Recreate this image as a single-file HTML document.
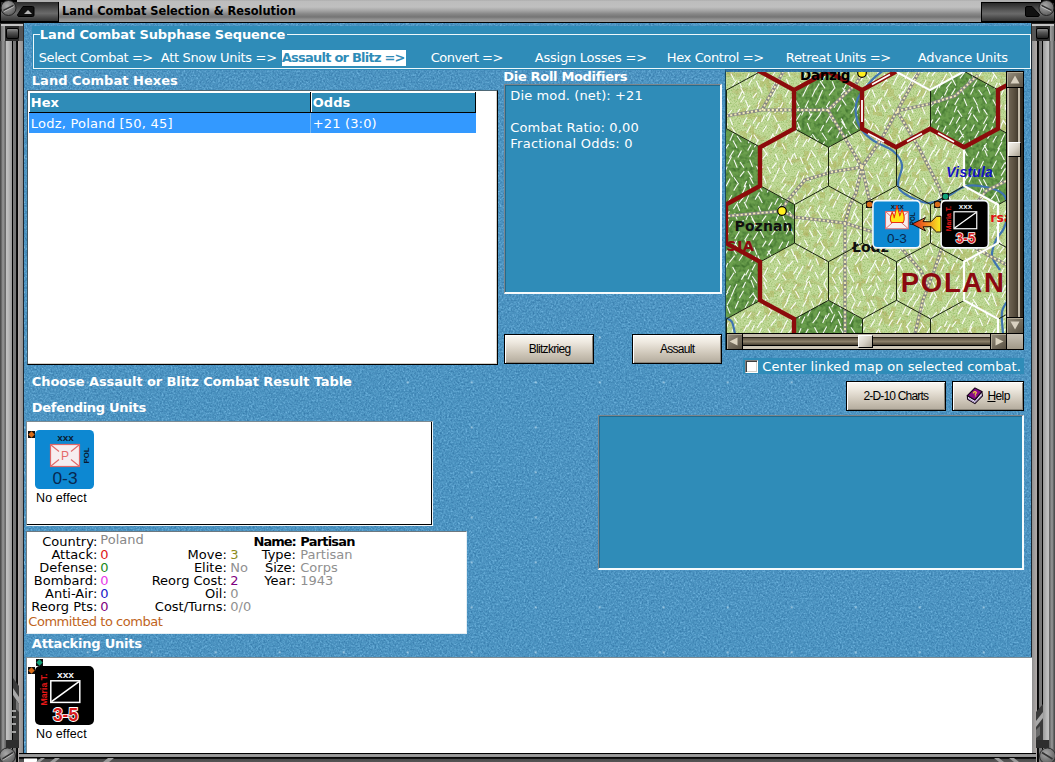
<!DOCTYPE html>
<html><head><meta charset="utf-8"><title>Land Combat Selection &amp; Resolution</title>
<style>
*{box-sizing:border-box}
html,body{margin:0;padding:0}
body{width:1055px;height:762px;overflow:hidden;position:relative;background:#4a94c0;font-family:"DejaVu Sans","Liberation Sans",sans-serif;font-size:13px;color:#fff}
.a{position:absolute}
.t{position:absolute;white-space:pre;line-height:16px;height:16px}
.b{font-weight:bold}
.ar{font-family:"Liberation Sans",sans-serif}
.solid{background:#2f8cb8}
.btn{position:absolute;border:1px solid #000;box-shadow:inset 1px 1px 0 #fff,inset -1px -1px 0 #8a8478;background:linear-gradient(#fbf8f3 0,#eee9e0 25%,#dbd4c8 50%,#c7bfb1 75%,#b3ab9d 100%);color:#000;font-family:"Liberation Sans",sans-serif;font-size:12px}
.btn .t{line-height:28px;height:28px;top:0}
.sunk{position:absolute;border:solid #f6fbfd;border-width:1px 2px 2px 1px;border-top-color:#7d858b;border-left-color:#7d858b;box-shadow:inset 1px 1px 0 rgba(0,20,40,.28)}
.lb{position:absolute;background:#fff;border:1px solid #000;border-top-color:#4e6876;border-left-color:#3c5666;box-shadow:inset -1px -1px 0 #d4d0c8}
.lb2{position:absolute;background:#fff;border:1px solid #f4f8fa;border-top-color:#7b8a92;border-left-color:#7b8a92;box-shadow:inset -1px -1px 0 #000}
.k{color:#000}
</style></head>
<body>
<svg class="a" style="left:24px;top:22px" width="1008" height="732"><defs>
<filter id="nz2" x="0" y="0" width="100%" height="100%" color-interpolation-filters="sRGB"><feTurbulence type="fractalNoise" baseFrequency="0.55" numOctaves="2" seed="8"/>
<feColorMatrix type="matrix" values="0 0 0 0 0.43  0 0 0 0 0.7  0 0 0 0 0.87  1.5 1.5 0 0 -1.2"/></filter>
<filter id="nz3" x="0" y="0" width="100%" height="100%" color-interpolation-filters="sRGB"><feTurbulence type="fractalNoise" baseFrequency="0.55" numOctaves="2" seed="21"/>
<feColorMatrix type="matrix" values="0 0 0 0 0.22  0 0 0 0 0.49  0 0 0 0 0.68  1.5 1.5 0 0 -1.2"/></filter></defs>
<rect width="1008" height="732" fill="#4c95c2"/>
<rect width="1008" height="732" filter="url(#nz2)"/><rect width="1008" height="732" filter="url(#nz3)"/></svg>
<div class="a" style="left:24px;top:23px;width:1008px;height:730px;background-image:radial-gradient(circle at 1px 1px,rgba(225,245,255,.9) .45px,rgba(225,245,255,0) 1px);background-size:64px 45px;background-position:62.7px 43.4px"></div>
<div class="a" style="left:0;top:0;width:1055px;height:23px;background:linear-gradient(#a8a8a8 0,#bdbdbd 1px,#c0c0c0 7px,#a2a2a2 11px,#868686 14px,#757575 17px,#8e8e8e 19px,#9c9c9c 22px,#000 22px,#000 23px)"></div>
<div class="a" style="left:0;top:0;width:59px;height:23px;background:#000"></div>
<div class="a" style="left:1px;top:2px;width:57px;height:19px;background:linear-gradient(#2a2a2a,#5c5c5c 45%,#6a6a6a 60%,#333 100%)"></div>
<div class="a" style="left:17px;top:0;width:42px;height:2px;background:#b0b0b0"></div>
<svg class="a" style="left:0;top:0" width="59" height="23"><defs><radialGradient id="scr" cx=".4" cy=".35" r=".7"><stop offset="0" stop-color="#a8a8a8"/><stop offset="1" stop-color="#5a5a5a"/></radialGradient></defs>
<circle cx="8.5" cy="8" r="7.5" fill="url(#scr)" stroke="#222" stroke-width="1"/><path d="M3.5 10.5L13.5 5.5" stroke="#333" stroke-width="1.6"/><path d="M4 11.5L14 6.5" stroke="#ccc" stroke-width=".8"/>
<path d="M23 6.5h9.5a1.5 1.5 0 0 1 1.5 1.5v7a1.5 1.5 0 0 1-1.5 1.5H19a1.5 1.5 0 0 1-1-2.6z" fill="#111" stroke="#000"/><path d="M24 14l4-4 4 4z" fill="#b4b4b4"/></svg>
<div class="a" style="left:981px;top:0;width:74px;height:23px;background:#000"></div>
<div class="a" style="left:982px;top:3px;width:72px;height:18px;background:linear-gradient(#2a2a2a,#5c5c5c 45%,#6a6a6a 60%,#333 100%)"></div>
<div class="a" style="left:981px;top:0;width:60px;height:2px;background:#b0b0b0"></div>
<svg class="a" style="left:981px;top:0" width="74" height="23">
<circle cx="65.5" cy="8" r="7.5" fill="url(#scr)" stroke="#222" stroke-width="1"/><path d="M60.5 5.5L70.5 10.5" stroke="#333" stroke-width="1.6"/><path d="M60 6.5L70 11.5" stroke="#ccc" stroke-width=".8"/>
<path d="M46 6.5h5l7 7.5a1.5 1.5 0 0 1-1 2.5H46a1.5 1.5 0 0 1-1.5-1.5v-7a1.5 1.5 0 0 1 1.5-1.5z" fill="#111" stroke="#000"/></svg>
<div class="t b k" style="left:62.1px;top:3.1px;font-size:11.4px;letter-spacing:-0.02px;">Land Combat Selection &amp; Resolution</div>
<div class="a" style="left:0;top:23px;width:24px;height:739px;background:linear-gradient(90deg,#444 0,#585858 1px,#9a9a9a 3px,#6c6c6c 5px,#666 6px,#c2c2c2 6px,#bcbcbc 8px,#999 12px,#000 12px,#000 13px,#7a7a7a 13px,#757575 16px,#111 16px,#000 18px,#b2acaa 18px,#909090 23px,#1c2630 23px,#1c2630 24px)"></div>
<div class="a" style="left:1031px;top:23px;width:24px;height:739px;background:linear-gradient(270deg,#444 0,#585858 1px,#9a9a9a 3px,#6c6c6c 5px,#666 6px,#c2c2c2 6px,#bcbcbc 8px,#999 12px,#000 12px,#000 13px,#7a7a7a 13px,#757575 16px,#111 16px,#000 18px,#b2acaa 18px,#909090 23px,#1c2630 23px,#1c2630 24px)"></div>
<div class="a" style="left:0;top:23px;width:24px;height:18px;background:#2a2a2a"></div>
<div class="a" style="left:1px;top:24px;width:22px;height:2px;background:#c4c4c4"></div>
<div class="a" style="left:1px;top:26px;width:4px;height:15px;background:linear-gradient(90deg,#777,#a0a0a0)"></div>
<div class="a" style="left:6px;top:28px;width:13px;height:11px;border-radius:2px;border:1px solid #000;background:linear-gradient(#8a8a8a,#555 40%,#222)"></div>
<div class="a" style="left:19px;top:26px;width:4px;height:15px;background:#555"></div>
<div class="a" style="left:1031px;top:23px;width:24px;height:18px;background:#2a2a2a"></div>
<div class="a" style="left:1032px;top:24px;width:22px;height:2px;background:#c4c4c4"></div>
<div class="a" style="left:1050px;top:26px;width:4px;height:15px;background:linear-gradient(270deg,#777,#a0a0a0)"></div>
<div class="a" style="left:1036px;top:28px;width:13px;height:11px;border-radius:2px;border:1px solid #000;background:linear-gradient(#8a8a8a,#555 40%,#222)"></div>
<div class="a" style="left:1032px;top:26px;width:4px;height:15px;background:#555"></div>
<div class="a solid" style="left:32px;top:26px;width:999px;height:44px"></div>
<div class="a" style="left:33px;top:34px;width:998px;height:35px;border:1px solid #eef8fb"></div>
<div class="a solid" style="left:40px;top:33px;width:247px;height:3px"></div>
<div class="t b" style="left:39.8px;top:26.7px;letter-spacing:-.11px">Land Combat Subphase Sequence</div>
<div class="t" style="left:38.8px;top:49.8px;letter-spacing:-0.45px;">Select Combat =></div>
<div class="t" style="left:160.8px;top:49.8px;letter-spacing:-0.32px;">Att Snow Units =></div>
<div class="t" style="left:430.8px;top:49.8px;letter-spacing:-0.53px;">Convert =></div>
<div class="t" style="left:534.8px;top:49.8px;letter-spacing:-0.24px;">Assign Losses =></div>
<div class="t" style="left:666.8px;top:49.8px;letter-spacing:-0.38px;">Hex Control =></div>
<div class="t" style="left:785.8px;top:49.8px;letter-spacing:-0.37px;">Retreat Units =></div>
<div class="t" style="left:917.8px;top:49.8px;letter-spacing:-0.26px;">Advance Units</div>
<div class="a" style="left:282px;top:50px;width:124px;height:16px;background:#fff"></div>
<div class="t b" style="left:281.8px;top:49.8px;letter-spacing:-0.77px;color:#2f8cb8">Assault or Blitz =></div>
<div class="t b" style="left:31.8px;top:72.8px;letter-spacing:0.02px;">Land Combat Hexes</div>
<div class="lb" style="left:27px;top:90px;width:471px;height:275px"></div>
<div class="a" style="left:29px;top:92px;width:447px;height:21px;background:#000"></div>
<div class="a" style="left:29px;top:92px;width:281px;height:20px;background:#2f8cb8;border-top:1px solid #fff;border-left:1px solid #fff"></div>
<div class="a" style="left:311px;top:92px;width:164px;height:20px;background:#2f8cb8;border-top:1px solid #fff;border-left:1px solid #fff"></div>
<div class="t b" style="left:30.8px;top:95.3px;">Hex</div>
<div class="t b" style="left:312.8px;top:95.3px;">Odds</div>
<div class="a" style="left:29px;top:113px;width:447px;height:20px;background:#3399ff"></div>
<div class="a" style="left:310px;top:113px;width:1px;height:20px;background:#7ab8f0"></div>
<div class="t" style="left:30.8px;top:116.3px;letter-spacing:0.22px;">Lodz, Poland [50, 45]</div>
<div class="t" style="left:312.8px;top:116.3px;letter-spacing:0.15px;">+21 (3:0)</div>
<div class="t b" style="left:503.3px;top:69.3px;letter-spacing:-0.32px;">Die Roll Modifiers</div>
<div class="sunk solid" style="left:504px;top:84px;width:218px;height:210px"></div>
<div class="t" style="left:510.3px;top:88.3px;letter-spacing:0.12px;">Die mod. (net): +21</div>
<div class="t" style="left:510.3px;top:120.3px;letter-spacing:0.14px;">Combat Ratio: 0,00</div>
<div class="t" style="left:510.3px;top:136.3px;letter-spacing:0.26px;">Fractional Odds: 0</div>
<div class="btn" style="left:504px;top:334px;width:90px;height:30px"><span class="t" style="left:23.700000000000045px;letter-spacing:-0.69px;">Blitzkrieg</span></div>
<div class="btn" style="left:632px;top:334px;width:90px;height:30px"><span class="t" style="left:26.899999999999977px;letter-spacing:-0.68px;">Assault</span></div>
<div class="btn" style="left:846px;top:381px;width:100px;height:30px"><span class="t" style="left:16.5px;letter-spacing:-0.83px;">2-D-10 Charts</span></div>
<div class="btn" style="left:952px;top:381px;width:72px;height:30px"><span class="t" style="left:34.39999999999998px;letter-spacing:-0.57px;"><u>H</u>elp</span></div>
<svg class="a" style="left:966px;top:386px" width="20" height="20" viewBox="0 0 20 20"><path d="M1.3 9.6L1.6 13.2 8.9 17.6 16.5 9.9 15.9 5.6 8.9 13.9z" fill="#f0ecf8" stroke="#18081c" stroke-width="1.1" stroke-linejoin="round"/><path d="M2.5 12.6l6.4 3.7 6.8-7" stroke="#a890c8" stroke-width="1" fill="none"/><path d="M8.9 2L15.9 5.6 8.9 13.9 1.3 9.6z" fill="#880a88" stroke="#18081c" stroke-width="1.1" stroke-linejoin="round"/><text x="9" y="10.5" font-family="Liberation Sans,sans-serif" font-weight="bold" font-size="7.5" fill="#ffe820" text-anchor="middle" transform="rotate(-15 9 8)">?</text></svg>
<div class="a solid" style="left:743px;top:358px;width:281px;height:16px"></div>
<div class="a" style="left:745px;top:360px;width:13px;height:13px;background:#fff;border:1px solid #808080;border-right-color:#fff;border-bottom-color:#fff;box-shadow:inset 1px 1px 0 #404040,inset -1px -1px 0 #d4d0c8"></div>
<div class="t" style="left:762.3px;top:359.1px;letter-spacing:0.06px;">Center linked map on selected combat.</div>
<div class="t b" style="left:31.8px;top:374.3px;letter-spacing:-0.09px;">Choose Assault or Blitz Combat Result Table</div>
<div class="t b" style="left:31.8px;top:400.3px;letter-spacing:-0.29px;">Defending Units</div>
<div class="t b" style="left:31.8px;top:636.3px;letter-spacing:-0.23px;">Attacking Units</div>
<div class="lb2" style="left:26px;top:421px;width:407px;height:105px"></div>
<div class="sunk solid" style="left:598px;top:415px;width:426px;height:155px"></div>
<div class="a" style="left:26px;top:531px;width:441px;height:103px;background:#fff;border:1px solid #6c7880;border-right-color:#e4eef4;border-bottom-color:#e4eef4"></div>
<div class="t k" style="right:957.7px;top:534.3px;">Country:</div>
<div class="t k" style="right:957.7px;top:547.3px;">Attack:</div>
<div class="t k" style="right:957.7px;top:560.3px;">Defense:</div>
<div class="t k" style="right:957.7px;top:573.3px;">Bombard:</div>
<div class="t k" style="right:957.7px;top:586.3px;">Anti-Air:</div>
<div class="t k" style="right:957.7px;top:599.3px;">Reorg Pts:</div>
<div class="t " style="left:100.3px;top:532.1px;color:#888">Poland</div>
<div class="t " style="left:100.3px;top:547.3px;color:#e01818">0</div>
<div class="t " style="left:100.3px;top:560.3px;color:#1a8a1a">0</div>
<div class="t " style="left:100.3px;top:573.3px;color:#e838e8">0</div>
<div class="t " style="left:100.3px;top:586.3px;color:#1818c8">0</div>
<div class="t " style="left:100.3px;top:599.3px;color:#800080">0</div>
<div class="t k" style="right:828.2px;top:547.3px;">Move:</div>
<div class="t k" style="right:828.2px;top:560.3px;">Elite:</div>
<div class="t k" style="right:828.2px;top:573.3px;">Reorg Cost:</div>
<div class="t k" style="right:828.2px;top:586.3px;">Oil:</div>
<div class="t k" style="right:828.2px;top:599.3px;">Cost/Turns:</div>
<div class="t " style="left:230.3px;top:547.3px;color:#8c8c20">3</div>
<div class="t " style="left:230.3px;top:560.3px;color:#909090">No</div>
<div class="t " style="left:230.3px;top:573.3px;color:#800080">2</div>
<div class="t " style="left:230.3px;top:586.3px;color:#909090">0</div>
<div class="t " style="left:230.3px;top:599.3px;color:#909090">0/0</div>
<div class="t k b" style="left:253.6px;top:534.3px;letter-spacing:-1.04px;">Name:</div>
<div class="t k b" style="left:300.3px;top:534.3px;letter-spacing:-0.81px;">Partisan</div>
<div class="t k" style="right:759px;top:547.3px;">Type:</div>
<div class="t k" style="right:759px;top:560.3px;">Size:</div>
<div class="t k" style="right:759px;top:573.3px;">Year:</div>
<div class="t " style="left:300.3px;top:547.3px;color:#909090">Partisan</div>
<div class="t " style="left:300.3px;top:560.3px;color:#909090">Corps</div>
<div class="t " style="left:300.3px;top:573.3px;color:#909090">1943</div>
<div class="t" style="left:28.3px;top:613.8px;letter-spacing:-0.46px;color:#c0641c">Committed to combat</div>
<div class="a" style="left:26px;top:657px;width:1006px;height:97px;background:#fff;border-top:1px solid #7b8a92;border-left:1px solid #7b8a92;border-bottom:1px solid #000"></div>
<div class="a" style="left:19px;top:753px;width:1017px;height:9px;background:linear-gradient(#000 0,#000 1px,#8e8e8e 1px,#a2a2a2 3px,#8a8a8a 4px,#000 4px,#111 5.5px,#4a4a4a 5.5px,#555 9px)"></div>
<svg class="a" style="left:0;top:744px" width="1055" height="18"><rect x="24" y="14.5" width="13" height="4" fill="#fff"/><path d="M36 18l5-4h4l-5 4zM50 18l5-4h5l-5 4zM103 18l5-4h6l-5 4zM1004 18l-5-4h-5l5 4zM1019 18l-5-4h-5l5 4z" fill="#9c9c9c"/>
<circle cx="7.5" cy="12" r="8" fill="url(#scr)" stroke="#2a2a2a"/><path d="M2.5 15L13 8.5" stroke="#333" stroke-width="1.6"/><path d="M3 16L13.5 9.5" stroke="#c8c8c8" stroke-width=".8"/>
<circle cx="1047.5" cy="12" r="8" fill="url(#scr)" stroke="#2a2a2a"/><path d="M1042 8.5L1052.5 15" stroke="#333" stroke-width="1.6"/></svg>
<svg class="a" style="left:0;top:670px" width="24" height="84"><path d="M13 8l6 8v62h-6z" fill="#3a3a3a"/><path d="M13 18l6 9v7l-6-9z" fill="#a8a8a8"/><path d="M16 30l3 4v8l-3-3z" fill="#777"/><path d="M12 41h4M12 47h4M12 54h4M12 62h4" stroke="#c8c8c8" stroke-width="1.5"/><path d="M6 70h13v8H6z" fill="#2e2e2e"/></svg>
<svg class="a" style="left:1031px;top:670px" width="24" height="84"><path d="M12 34l-7 8v36h7z" fill="#3a3a3a"/><path d="M12 42l-7 9v6l7-9z" fill="#a8a8a8"/><path d="M9 56l-4 4v8l4-3z" fill="#6a6a6a"/><path d="M18 70h-13v8h13z" fill="#2e2e2e"/></svg>
<svg class="a" style="left:726px;top:72px" width="280" height="261" viewBox="0 0 280 261"><defs><filter id="tx" x="0" y="0" width="100%" height="100%" color-interpolation-filters="sRGB"><feTurbulence type="fractalNoise" baseFrequency="0.13" numOctaves="2" seed="5"/><feColorMatrix type="matrix" values="0 0 0 0 0.72  0 0 0 0 0.72  0 0 0 0 0.44  3.2 0 0 0 -1.75"/></filter>
<filter id="tf" x="0" y="0" width="100%" height="100%" color-interpolation-filters="sRGB"><feTurbulence type="fractalNoise" baseFrequency="0.25" numOctaves="3" seed="9"/><feColorMatrix type="matrix" values="0 0 0 0 0.22  0 0 0 0 0.42  0 0 0 0 0.16  1.8 0 0 0 -0.7"/></filter>
<filter id="tn" x="0" y="0" width="100%" height="100%" color-interpolation-filters="sRGB"><feTurbulence type="fractalNoise" baseFrequency="0.7" numOctaves="2" seed="2"/><feColorMatrix type="matrix" values="0 0 0 0 0.52  0 0 0 0 0.7  0 0 0 0 0.34  1.2 1.2 0 0 -1.08"/></filter>
<clipPath id="fc"><path id="fp" d="M102 -0.5L136 18.1L136 56.7L102 75.3L68 56.7L68 18.1ZM238 -0.5L272 18.1L272 56.7L238 75.3L204 56.7L204 18.1ZM0 56.7L34 75.3L34 113.9L0 132.5L-34 113.9L-34 75.3ZM272 56.7L306 75.3L306 113.9L272 132.5L238 113.9L238 75.3ZM34 113.9L68 132.5L68 171.1L34 189.7L0 171.1L0 132.5ZM0 171.1L34 189.7L34 228.3L0 246.9L-34 228.3L-34 189.7ZM102 228.3L136 246.9L136 285.5L102 304.1L68 285.5L68 246.9Z"/></clipPath>
<linearGradient id="arr" x1="0" x2="1"><stop offset="0" stop-color="#d82818"/><stop offset=".45" stop-color="#f07820"/><stop offset="1" stop-color="#f8f020"/></linearGradient></defs><rect width="280" height="261" fill="#c3da9a"/><rect width="280" height="261" filter="url(#tx)"/><rect width="280" height="261" filter="url(#tn)"/><path d="M67 145h5v4h-5zM67 140h5v6h-5zM199 138h5v5h-5zM202 138h5v4h-5zM202 144h3v6h-3zM77 156h5v7h-5zM73 152h4v6h-4zM78 155h4v6h-4zM176 82h4v7h-4zM178 80h3v6h-3zM178 82h4v6h-4zM157 186h4v6h-4zM158 183h5v4h-5zM248 6h5v4h-5zM252 4h3v7h-3zM254 4h4v5h-4zM20 155h4v7h-4zM196 259h4v6h-4zM193 256h5v7h-5zM181 157h4v7h-4zM259 113h4v6h-4zM261 115h4v4h-4zM38 164h5v6h-5zM34 162h4v7h-4zM190 250h5v6h-5zM188 250h4v5h-4zM170 80h3v4h-3zM167 80h4v6h-4zM166 80h4v5h-4zM182 28h4v5h-4zM181 27h4v4h-4zM248 115h3v4h-3zM247 120h4v6h-4zM24 164h5v6h-5zM25 160h5v6h-5zM156 13h4v5h-4zM156 9h5v5h-5zM161 12h4v6h-4zM237 256h4v4h-4zM143 49h3v4h-3zM144 52h4v5h-4zM146 53h5v4h-5zM94 63h3v6h-3zM94 64h3v5h-3zM96 66h4v4h-4zM109 196h4v7h-4zM114 194h3v4h-3zM13 125h3v7h-3zM97 167h4v6h-4zM99 171h3v5h-3zM106 22h3v6h-3zM107 20h5v4h-5zM104 127h5v7h-5zM106 127h4v4h-4zM34 9h4v6h-4zM38 8h5v4h-5zM27 153h5v5h-5zM147 150h4v4h-4zM149 150h3v4h-3zM149 144h4v6h-4zM217 130h3v4h-3zM217 131h4v5h-4zM51 69h4v6h-4zM50 63h5v4h-5zM50 66h5v5h-5zM165 238h4v7h-4zM164 244h3v7h-3zM160 243h5v5h-5zM42 135h4v7h-4zM40 133h4v5h-4zM225 55h4v6h-4zM226 50h5v7h-5zM165 235h5v4h-5zM206 253h4v5h-4zM208 249h3v5h-3zM203 252h4v6h-4zM188 9h4v4h-4zM187 12h3v4h-3zM81 93h3v4h-3zM80 94h5v4h-5zM265 101h3v6h-3zM265 106h5v6h-5zM102 205h4v6h-4zM106 202h4v4h-4zM106 202h3v6h-3zM53 170h4v6h-4zM54 166h3v4h-3zM93 187h4v5h-4zM90 185h4v4h-4zM90 186h5v6h-5zM16 36h4v5h-4zM15 38h4v7h-4zM15 40h3v6h-3zM44 155h3v5h-3zM189 102h4v7h-4zM186 100h4v5h-4zM218 11h5v7h-5zM222 9h4v7h-4zM216 5h4v7h-4zM178 28h5v5h-5zM175 28h4v5h-4zM181 113h4v5h-4zM180 114h3v4h-3zM24 142h4v6h-4zM24 141h4v4h-4zM262 186h4v4h-4zM258 189h4v7h-4zM114 217h5v7h-5zM115 219h5v5h-5zM130 194h5v5h-5zM132 197h4v6h-4zM128 194h4v7h-4zM56 201h5v5h-5zM59 202h5v5h-5zM170 114h3v4h-3zM169 112h3v4h-3zM137 235h4v4h-4zM137 234h4v4h-4zM14 190h5v6h-5zM15 189h3v6h-3zM23 175h3v4h-3zM46 13h4v6h-4zM132 211h3v7h-3zM136 207h5v4h-5zM118 135h5v5h-5zM118 131h5v6h-5zM118 60h4v6h-4zM113 57h5v7h-5zM114 61h3v7h-3zM185 86h3v7h-3zM180 264h3v5h-3zM31 146h5v4h-5zM191 259h3v4h-3zM193 258h4v7h-4zM90 227h5v5h-5zM91 227h3v4h-3zM262 69h5v7h-5zM174 166h5v7h-5zM171 168h5v7h-5zM128 192h4v6h-4zM259 177h5v4h-5zM258 179h4v4h-4zM26 61h4v5h-4zM23 54h5v7h-5zM173 110h5v4h-5zM172 104h4v4h-4zM172 109h3v7h-3zM79 111h5v5h-5zM76 112h3v7h-3zM24 39h5v6h-5zM22 40h5v7h-5zM100 221h3v7h-3zM103 223h4v5h-4zM7 160h3v5h-3zM7 166h5v6h-5zM273 12h4v4h-4zM274 7h3v4h-3zM185 126h4v4h-4zM191 132h4v5h-4zM233 104h4v6h-4zM238 111h5v4h-5zM130 170h4v5h-4zM130 173h4v4h-4zM133 173h5v6h-5zM268 43h4v4h-4zM266 41h5v6h-5zM154 124h4v4h-4zM156 131h3v7h-3zM183 50h4v7h-4zM178 47h3v6h-3zM88 159h3v5h-3zM87 157h3v7h-3zM25 139h3v6h-3zM121 253h4v6h-4zM123 254h4v7h-4zM122 258h4v7h-4zM41 11h4v5h-4zM40 11h4v4h-4zM63 202h5v5h-5zM58 200h4v4h-4zM63 199h4v4h-4zM103 41h4v4h-4zM105 36h5v4h-5zM104 40h3v6h-3zM124 109h5v5h-5zM126 109h4v6h-4zM52 249h4v6h-4zM51 249h3v7h-3zM161 43h5v6h-5zM26 139h4v5h-4zM27 142h5v6h-5zM25 145h4v6h-4zM74 36h4v5h-4zM75 32h5v5h-5zM244 258h3v4h-3zM243 257h4v4h-4zM244 255h4v4h-4zM151 230h5v6h-5zM153 234h4v7h-4zM152 228h3v7h-3zM103 159h3v5h-3zM104 164h3v4h-3zM151 189h5v6h-5zM149 196h5v5h-5zM77 48h3v7h-3zM82 47h3v7h-3zM75 103h4v7h-4zM76 103h3v4h-3zM79 100h4v4h-4zM258 163h4v7h-4zM93 169h3v4h-3zM69 220h4v7h-4zM66 216h5v6h-5zM269 58h4v5h-4zM271 62h4v6h-4zM241 195h5v4h-5zM242 190h4v7h-4zM229 247h5v5h-5zM91 62h4v7h-4zM78 89h4v4h-4zM50 43h4v5h-4zM50 44h4v5h-4zM49 43h5v5h-5zM16 203h5v4h-5zM14 208h5v7h-5zM15 206h5v6h-5zM213 27h4v5h-4zM212 30h4v6h-4zM212 31h5v6h-5zM231 57h4v6h-4zM235 197h3v7h-3zM234 196h4v7h-4zM70 181h3v6h-3zM70 182h5v5h-5zM68 179h5v6h-5zM135 50h3v4h-3zM134 49h5v6h-5zM80 82h3v5h-3zM76 86h5v5h-5zM55 151h4v5h-4zM50 151h4v4h-4zM209 61h4v4h-4zM211 57h4v4h-4zM213 58h4v6h-4zM119 146h5v6h-5zM117 145h5v5h-5zM122 145h3v5h-3zM205 55h4v4h-4zM202 52h4v5h-4zM265 18h4v5h-4zM265 20h4v6h-4zM265 16h4v4h-4zM218 105h5v6h-5zM221 101h3v6h-3zM219 104h3v4h-3zM231 95h4v7h-4zM260 184h5v7h-5zM260 187h4v5h-4zM108 255h4v6h-4zM166 60h4v7h-4zM167 56h5v6h-5zM163 62h5v4h-5zM261 39h4v5h-4zM260 35h4v4h-4zM222 194h3v4h-3zM227 190h3v7h-3zM227 193h4v6h-4zM221 206h3v7h-3zM216 211h4v5h-4zM151 199h4v4h-4zM146 202h3v7h-3zM259 111h5v7h-5zM258 112h3v6h-3zM70 122h4v6h-4zM72 121h5v7h-5zM93 13h3v7h-3zM97 15h3v5h-3zM123 109h5v7h-5zM123 109h5v6h-5zM149 33h3v7h-3zM147 36h5v7h-5zM157 162h5v4h-5zM157 161h3v5h-3zM156 160h3v5h-3zM35 27h4v5h-4zM31 30h4v5h-4zM119 83h3v6h-3zM119 80h4v6h-4zM116 80h3v6h-3zM108 221h4v4h-4zM109 222h4v5h-4zM144 74h4v6h-4zM140 75h4v6h-4zM270 237h5v7h-5zM109 152h5v5h-5zM113 150h3v7h-3zM97 168h4v4h-4zM96 168h4v6h-4zM94 30h3v7h-3zM91 31h3v7h-3zM279 47h3v5h-3zM78 223h5v7h-5zM78 221h3v6h-3zM129 120h4v5h-4zM128 127h4v5h-4zM90 99h4v6h-4zM16 101h5v6h-5zM281 174h3v4h-3zM27 21h3v5h-3zM28 21h3v5h-3zM275 80h3v5h-3zM276 79h3v5h-3zM197 94h5v5h-5zM194 93h4v6h-4zM198 89h4v7h-4zM256 142h4v6h-4zM252 143h4v6h-4zM207 156h5v5h-5zM204 152h3v6h-3zM205 155h5v6h-5zM149 125h4v4h-4zM146 126h5v7h-5zM242 188h3v5h-3zM240 183h4v7h-4zM103 50h3v6h-3zM13 207h4v5h-4zM15 206h5v6h-5zM95 13h4v4h-4zM11 39h4v6h-4zM200 164h3v5h-3zM158 145h4v7h-4zM160 145h5v4h-5zM5 166h4v7h-4zM50 211h5v4h-5zM215 177h3v6h-3zM214 183h4v7h-4zM214 182h4v5h-4zM106 89h4v6h-4zM102 90h4v7h-4zM246 260h4v7h-4zM243 257h5v4h-5zM246 255h4v6h-4zM86 236h5v5h-5zM87 238h4v6h-4zM83 238h4v5h-4zM114 212h4v6h-4zM114 211h4v4h-4zM159 246h3v6h-3zM162 244h4v6h-4zM158 245h5v7h-5zM191 149h3v5h-3zM190 153h5v4h-5zM188 156h3v7h-3zM102 231h3v7h-3zM101 231h4v7h-4zM100 233h3v5h-3zM215 219h5v4h-5zM210 213h3v5h-3zM221 52h3v5h-3zM224 50h3v4h-3zM218 105h3v4h-3zM218 106h4v5h-4zM191 20h4v5h-4zM195 15h4v7h-4zM195 18h4v6h-4zM21 43h5v4h-5zM31 45h4v5h-4zM28 43h3v6h-3zM127 31h4v6h-4zM130 29h5v4h-5zM68 106h3v4h-3zM65 110h4v5h-4zM256 84h4v4h-4zM251 86h4v4h-4zM252 84h3v4h-3zM243 178h3v7h-3zM239 180h4v6h-4zM240 180h4v4h-4zM151 165h5v6h-5zM152 168h5v4h-5zM170 248h4v5h-4zM175 248h5v7h-5zM80 181h4v4h-4zM83 181h5v6h-5zM228 192h5v7h-5zM223 198h4v4h-4zM174 67h4v4h-4zM173 68h5v5h-5zM172 66h5v5h-5zM204 156h4v4h-4zM206 153h3v4h-3zM173 97h3v5h-3zM169 95h5v7h-5zM169 98h4v6h-4zM254 234h3v6h-3zM253 234h4v7h-4zM104 189h4v4h-4zM165 17h3v7h-3zM161 18h4v7h-4zM160 15h3v4h-3zM242 61h4v7h-4zM239 64h4v4h-4zM244 66h4v5h-4zM244 67h4v6h-4zM48 26h4v5h-4zM51 22h5v6h-5zM143 104h3v4h-3zM143 101h4v6h-4zM47 167h4v5h-4zM223 195h4v7h-4zM78 79h5v6h-5zM81 82h5v4h-5zM53 177h4v7h-4zM54 176h4v4h-4zM54 177h5v5h-5zM92 221h3v5h-3zM94 221h4v7h-4zM88 259h4v6h-4zM90 258h5v5h-5zM72 258h4v4h-4zM88 54h3v4h-3zM92 54h4v5h-4zM91 56h4v6h-4zM17 61h4v6h-4zM14 59h4v4h-4zM17 59h4v5h-4zM1 107h4v4h-4zM-0 108h4v6h-4zM3 108h5v7h-5zM211 193h5v6h-5zM215 193h3v6h-3zM212 191h5v6h-5zM163 66h4v7h-4zM22 71h4v7h-4zM278 86h5v5h-5zM278 90h3v4h-3zM78 154h5v6h-5zM79 149h3v7h-3zM81 151h4v5h-4zM57 76h4v6h-4zM54 71h3v4h-3zM57 71h4v7h-4zM197 92h4v5h-4zM177 253h5v7h-5zM177 258h4v6h-4zM235 182h4v6h-4zM237 178h4v5h-4zM248 119h3v7h-3zM237 139h4v7h-4zM235 133h4v4h-4zM81 114h4v4h-4zM80 117h4v6h-4zM80 116h5v5h-5zM235 203h5v5h-5zM236 199h4v5h-4zM201 191h4v5h-4zM202 193h3v7h-3zM198 188h4v5h-4zM70 259h3v7h-3zM74 262h3v4h-3zM70 259h5v6h-5zM5 72h4v5h-4zM2 68h3v7h-3zM263 164h3v6h-3zM175 103h4v6h-4zM174 104h5v4h-5zM158 100h4v5h-4zM264 135h3v7h-3zM168 260h5v7h-5zM165 265h4v7h-4zM112 48h5v7h-5zM116 50h4v4h-4zM31 137h4v6h-4zM32 136h4v7h-4zM30 135h5v5h-5zM208 103h3v4h-3zM206 106h3v4h-3zM140 69h4v4h-4zM139 67h5v6h-5zM242 7h4v7h-4zM241 4h5v5h-5zM105 55h4v4h-4zM105 51h3v4h-3zM222 60h3v4h-3zM225 62h4v4h-4zM223 62h3v4h-3zM94 120h5v6h-5zM53 41h3v4h-3zM54 42h4v7h-4zM57 41h4v7h-4zM202 211h5v7h-5zM208 208h3v6h-3zM229 51h4v5h-4zM148 162h3v5h-3zM146 164h4v4h-4zM254 49h5v5h-5zM281 74h5v5h-5zM281 77h4v4h-4zM60 237h3v5h-3zM56 230h4v5h-4zM57 236h4v5h-4zM276 52h5v6h-5zM276 50h4v7h-4zM237 88h5v7h-5zM48 34h4v4h-4zM47 36h5v5h-5zM212 222h4v7h-4zM210 222h3v5h-3zM199 121h4v5h-4zM200 118h4v7h-4zM152 121h4v5h-4zM150 115h4v4h-4zM112 84h4v4h-4zM112 87h4v7h-4zM207 190h4v6h-4zM206 186h4v4h-4zM203 193h5v4h-5zM62 165h4v5h-4zM62 167h4v5h-4zM40 221h4v6h-4zM44 219h4v6h-4zM55 35h4v6h-4zM53 31h5v7h-5zM52 34h4v4h-4zM212 81h4v7h-4zM152 259h4v6h-4zM38 235h4v6h-4zM42 237h4v6h-4zM120 149h4v4h-4zM118 146h5v5h-5zM115 142h5v6h-5zM198 255h3v7h-3zM196 252h4v5h-4zM83 133h5v6h-5zM149 35h3v6h-3zM149 35h4v4h-4zM151 40h5v4h-5z" fill="#b2b35e" opacity=".42"/><path d="M102 -0.5L136 18.1L136 56.7L102 75.3L68 56.7L68 18.1ZM238 -0.5L272 18.1L272 56.7L238 75.3L204 56.7L204 18.1ZM0 56.7L34 75.3L34 113.9L0 132.5L-34 113.9L-34 75.3ZM272 56.7L306 75.3L306 113.9L272 132.5L238 113.9L238 75.3ZM34 113.9L68 132.5L68 171.1L34 189.7L0 171.1L0 132.5ZM0 171.1L34 189.7L34 228.3L0 246.9L-34 228.3L-34 189.7ZM102 228.3L136 246.9L136 285.5L102 304.1L68 285.5L68 246.9Z" fill="#6b9f4d"/><rect width="280" height="261" filter="url(#tf)" clip-path="url(#fc)"/><path d="M-4.3 -1.6l4.4 -7.6M5.1 0.1l3.1 -6.3M14.7 -1.3l3.5 -6M23 -4.5l4.5 -7.2M34.2 -2.6l3.1 -7M43.7 -0l3.5 -5.6M50.5 -3.5l3.3 -5.7M60.8 -1.5l4.3 -5.5M72 -2l4.1 -7.1M81.5 -2.6l3.7 -7M91.2 -3.1l-3.3 -6.2M96.6 -1.6l3.2 -6M110.9 -2.7l4.7 -7.5M116.5 0.6l-3.7 -5.5M130.5 -2.6l4.1 -5.3M138.7 -3.4l-2.5 -6.2M143.5 -2.5l3.6 -8M154.3 -4.4l3.3 -5.8M163.3 -1.6l4.7 -6M177.5 -0.4l-4.2 -6.3M181.7 -2.5l-3.3 -6.2M195.6 0.8l4.2 -6.8M201.1 -2.6l4.1 -7.6M209.5 -4.1l4 -6.4M223.2 -3l3.4 -6.4M228.4 -3.7l4.3 -6.9M241 -2.8l3.8 -6.6M251.8 -4.2l3 -6.8M258.1 -3.6l4.9 -6.3M266.6 -1.2l-4.4 -6.5M280.3 -1.4l3.5 -6.7M-1.6 6.9l-4 -5.9M8.6 8.7l-3.8 -7.1M19.6 9.4l3.6 -8.2M27.3 7.2l4.1 -7.6M37 9.3l3.7 -5.9M45.1 6.3l3.8 -6M55.2 6l3.2 -7.2M64.1 4.6l-2.9 -7.1M76.8 7.9l3.2 -7.3M85.8 9.3l-2.9 -7.1M95.9 9.6l3.1 -5.8M104 8.2l3.4 -6.4M111 7.1l3.4 -7.6M124.7 9.3l3.7 -6.4M134.7 9l4 -6.4M143.9 7.2l-4.5 -6.7M150.4 3.9l3.1 -5.9M161.3 9.8l-3.3 -8.1M169.2 8.2l4 -6.9M179.1 7l3.4 -7M185.9 7.4l4.7 -6.1M200.8 4.5l4.2 -7.3M206 3.9l4.5 -5.7M217 8.3l3.7 -6.4M226.3 5.2l-3.5 -6.6M233.9 6.4l5.2 -6.7M247.4 6.1l-3 -7.4M252.8 4.6l3.9 -6.3M265.2 9.5l2.9 -6.6M271 6.6l-4.9 -7.3M282 6.9l4.1 -7.1M-5.1 17.6l3.8 -6.1M6.5 14.3l3.9 -6.3M15.6 15l-3.3 -6.2M22.6 13.4l3.1 -5.8M33.3 16.4l-3 -7.5M45.8 16.7l3.5 -6.1M50.9 16.9l3.7 -7.5M63.1 13.7l-2.7 -6.7M71.4 18.3l3.2 -7.1M80 17.4l4.1 -7.7M89.5 18l3.7 -6.5M99.1 16.4l-4.9 -7.3M109.1 16.5l-2.9 -7.2M118 16.5l3.3 -6.2M125.9 18l-4.2 -7.9M137.2 17.3l3.9 -6.2M145.5 13.1l3.3 -6.8M155.3 14.3l5.4 -6.9M167.1 13l3.5 -7.8M174.8 16.7l4.4 -7.6M181.9 15.7l4.2 -7.2M196.1 15.6l4.2 -7.8M204.3 15.2l3.5 -7.1M213 15.7l3.8 -7.7M220.1 16.6l5.5 -7M229.8 13.4l-3.7 -6.9M240.8 13.8l3.4 -7M246.8 14.9l4.2 -6.7M259.3 15l4 -7.5M268.5 16.7l2.9 -6M277.8 18.1l-4.8 -7M-0.7 24.2l-3.8 -5.7M12.5 27l3.9 -7.9M18.4 22.5l-3.8 -7.1M26.7 26.1l4 -5.2M36.2 21.5l-2.7 -6.7M46.2 24.4l3.6 -6.8M59.2 25.1l3.6 -7.5M68.8 21.5l3.5 -7.3M76.6 24.6l3.8 -7.8M86.1 24.6l3.5 -7.9M93.1 25.8l3.5 -7.8M103 23.3l5.4 -6.9M115.2 22.6l4.2 -5.3M120.7 21.9l-4.2 -6.2M134.3 23.9l3.4 -7.7M139.9 25.2l4 -7.5M149.3 25.5l-3.3 -8.1M158.2 24.4l3.7 -7.5M172.9 26.4l4.3 -7.4M176.9 21.6l3.5 -7.1M191.1 24.3l3.3 -6.2M196.3 26.4l4.2 -7.9M208 22.2l3.9 -7.2M218.5 23.4l3.4 -6.9M225.4 22.7l3.9 -6.3M237.8 22.5l-2.9 -7.1M244.5 22.6l3 -6.2M256.3 23.3l-3.8 -5.6M264.3 22.5l-3 -7.4M275.1 22.9l3.6 -8M284.6 23.8l3.8 -7.9M-2.8 34.8l-4.7 -7M3.6 31.3l-4 -7.5M14.6 30.3l3.9 -6.3M22.6 35.9l-3.1 -7.6M31.9 32.6l3.3 -6.1M42.3 36.2l3.8 -7.2M54 36.1l3.1 -5.8M63.2 31.7l4 -6.4M72.8 34.1l-3.1 -5.8M79.1 35.6l3.5 -7.1M89.5 33.3l4 -7.6M100.2 35.1l3.5 -5.7M108.1 35.8l3 -6.8M120.3 33.5l-4.5 -6.6M130.3 32.7l-3.7 -6.9M136.2 31.9l3.6 -7.3M149 34.2l4.4 -7.1M152.9 31.7l2.7 -6M164.7 34.3l-2.5 -6.1M176.1 30.5l-3.4 -8.3M181.4 35.6l3.8 -6.6M191.9 34.7l3.1 -5.8M205.4 34.5l4.7 -6M212.8 30.9l4 -7M219.3 35.4l3 -6.8M228.7 32.9l4.1 -7.1M241 34l-3.1 -7.6M251.5 33.4l-4.2 -7.9M260.6 31.6l-3.2 -6M270.3 33.9l-3.5 -6.5M278.7 34.6l5.1 -6.5M1.5 43.5l4.3 -5.5M10.1 42.9l3.7 -5.9M20.3 39.1l3.8 -6.1M29.6 39.6l3.7 -6.9M39.8 44.5l4.2 -5.4M48.5 41.2l4.7 -6.1M56.1 42l3.2 -6M68.3 41.7l5.3 -6.7M75.6 43.5l3 -6.8M84.5 42.9l-3.4 -8.3M93.4 43.6l3.5 -7.8M103.7 41.2l-2.5 -6.3M111 39.5l4 -6.9M124.8 41.8l4.5 -7.3M129.8 40.3l3.8 -7.2M142.9 42l-3.2 -7.8M149.8 39.9l-2.8 -6.9M159.7 39.7l-3.9 -7.3M169.5 43.8l-2.7 -6.7M177.6 44.8l3.6 -7.5M187.2 41.2l-2.8 -6.9M199.2 42.5l-3.2 -7.9M209.3 42.2l3.5 -7.8M215 43.6l-4.1 -7.7M228.2 40.3l2.7 -6.1M236.1 44.8l-4.5 -6.7M242.5 42.3l4 -7.5M253.5 40.6l-2.5 -6.3M261.4 42.8l-3.8 -5.7M271.8 40.3l3.7 -7.6M281.7 41.8l-2.8 -6.8M-3 50.8l3.7 -6.9M6.6 53.3l-2.8 -7M16.9 52.6l4.3 -7.4M26.9 51.6l4.1 -6.6M35.4 50.3l3.1 -6.9M41.5 48.8l3.3 -7.4M51.3 50.1l-3.7 -6.9M64.6 48.2l3.4 -6.4M70 48.7l4.7 -7.5M82.1 47.9l4.1 -6.5M88.9 49l4.6 -5.8M100 50.6l3.9 -6.7M106.9 49.5l-3.3 -6.1M119 53.5l-3.7 -7M127.5 50.2l3.9 -8M138.6 48.4l-4.8 -7.2M143.7 53.5l-4.8 -7M158.7 52.6l4.5 -7.2M166.1 49.2l3.3 -5.7M177 50.5l-4 -5.9M184.6 48.7l-2.6 -6.4M191.3 53.2l3.5 -7.8M203.6 53.8l3.1 -6.4M209.5 51.2l4.3 -5.5M223.5 52.9l4 -7.6M230.1 51.5l3.9 -6.8M241.6 48.3l3.7 -7.5M251.9 49.6l-4.7 -7M257.4 51.9l4.2 -7.3M266.9 51.1l3.2 -7.1M280.7 53.6l-4.1 -6M-1.8 58.4l3.6 -6.8M9.3 60.7l-3.8 -5.6M20.6 61.1l4 -7.5M29.8 56.7l3.7 -6.4M36.7 60l4.1 -6.5M49.8 61.7l3.4 -7.6M55.8 58.9l-3.7 -6.9M69.2 61.1l3.7 -7M74.4 57.8l-3.1 -7.7M84.2 58.2l-2.9 -7.1M94.4 58.9l3.2 -6M101.9 60.4l4.3 -5.5M112.9 61.6l3.7 -7M120.5 56.8l-5 -7.4M131.7 57l-4.9 -7.3M144.3 57.4l2.9 -6.4M153 58.9l-4.1 -6.1M161.2 61l-3 -7.4M172.8 61.3l3.6 -7.3M176.4 58.6l3.7 -6.4M186.3 58.9l-3.6 -6.9M200.1 60.3l3 -6.2M209.9 59.9l3.2 -6.6M217 60l3.1 -6.3M229.3 60.8l4.7 -7.5M236.5 57.8l4.1 -5.3M245 59.1l3.4 -6.5M257.1 58.8l3.6 -6.8M263.6 61l3.1 -6.4M273.6 57l3.6 -8M285.2 62.6l3.5 -7.8M-6.3 70.3l-2.7 -6.7M3.8 68.8l3.5 -7.8M15.4 70.3l-4.3 -6.3M22.3 71.3l3.6 -8.1M32.4 69.4l-4.7 -6.9M43.7 69.2l3.4 -7.7M50.6 68.2l-3.8 -5.7M59.5 67.8l3 -6.7M69.8 68.8l3.9 -6.2M81.9 70.1l3.8 -6.5M90.6 68.2l-4.2 -6.2M100.9 68.3l-5 -7.5M110.8 66.1l3 -6.1M117.2 68.5l4 -6.4M126.5 65.7l-4.6 -6.9M138.4 69l-3.9 -7.4M148.7 70.7l3.6 -6.2M154.3 70.6l4.5 -7.7M166.4 68.6l-3.3 -6.3M175.5 71l-3.3 -8.1M186.2 67.9l5.2 -6.7M194.3 67.9l3.2 -6M200.4 70.2l3 -6.1M212.7 68.1l-3.4 -6.4M218.7 66.4l3.8 -6.6M232.9 67.8l4.6 -5.8M237.7 65.6l-4.1 -7.7M248.7 66.3l4.2 -7.3M261.5 66.6l4.6 -7.3M266.8 70.4l3.7 -6.4M275.1 69.2l3.6 -7.4M-1.1 78l3.7 -5.9M11 76l-4 -7.5M21.7 78.5l3.4 -5.9M28.4 75.2l4.1 -7.6M39.6 75.4l4.3 -5.5M47.7 76l3.1 -6.5M59.4 77.7l-3.3 -6.2M68.9 75.3l2.9 -6.5M76.7 74.7l4.5 -7.8M87.8 74.6l4.6 -7.4M95.3 75.9l3.3 -6.3M102.1 80.1l2.8 -6.4M112.2 77.5l2.8 -6.4M125.8 74.4l-4.3 -6.3M129.3 79.5l3.1 -5.9M142 78.1l3.7 -6.4M152.8 77.3l3.4 -7M162 77.4l3.2 -7.3M167.6 76.8l3.6 -7.3M180.9 78.9l5.2 -6.7M187.3 77.5l4.3 -7.5M196.7 75.4l4.7 -7.6M207.9 79.4l2.8 -6.3M217.5 77.9l3.7 -7.7M226 75.8l4 -7.5M233.4 75.3l5 -6.4M245.8 74.5l-2.8 -7M256.4 78.6l4.2 -7.3M261.4 79.1l-3.3 -6.1M271.8 77.2l4.1 -7.1M280.1 76.7l4.6 -5.8M-2.8 88.7l2.8 -6.2M3.3 85.7l4.4 -7.1M11.8 85.5l3.7 -6.9M23.6 84.8l3.5 -6.7M36.4 87.1l5.1 -6.5M41.8 83.7l-4.8 -7.2M52.2 88.6l-2.8 -6.9M64.5 88.5l2.9 -6.4M70.6 86.9l-2.5 -6.2M81 88.5l3.5 -8M89.8 85.4l-4.8 -7.1M98.7 83.3l4.6 -5.9M106.9 86.3l4.3 -5.4M117.6 86.6l4.2 -7.3M127.3 89l4.1 -7.1M135.2 85.3l-3.1 -5.9M145.6 84.6l2.7 -6M157.2 86.1l4.9 -6.2M163.8 85.2l-2.6 -6.4M172.4 84.4l4 -7.6M181.1 84.9l3.5 -6.6M195.5 85.3l3.1 -6.4M203.8 84.8l4 -6.9M209.4 83.9l4.2 -6.8M219.9 85.5l3.1 -7M231.1 86.3l3.6 -6.3M241.4 83.9l-3.3 -6.2M250 85.7l3 -6.1M261.4 84.4l-2.7 -6.7M269.3 83.8l4.3 -7.5M278.4 87.9l-4.2 -7.9M1.7 92.2l3.8 -7.8M11.2 95.8l-3.3 -8.2M17.9 95.6l-3.8 -5.6M26.6 94.8l-2.9 -7.2M37 96l-3.9 -5.8M45.9 96.4l4.5 -5.8M57.2 96.3l3.6 -8M66.4 93.3l-4.1 -7.6M77.1 91.9l-2.8 -6.9M87.8 97.3l-4 -6M94.7 95.3l-2.9 -7.1M106.4 92.2l-2.5 -6.1M115.9 95.2l2.9 -6.5M123.8 94.1l-2.8 -6.8M129.5 96l3.3 -6.2M142.5 95.5l-4.2 -6.2M148.5 92.2l3.8 -6.6M159.8 97.3l2.7 -6M171 93.4l3.9 -6.7M182.2 92.7l4.3 -5.5M187.2 93.1l3.4 -7M201 91.8l3.4 -7.1M205 96.7l-3.3 -8.1M215.5 92.4l4 -5.2M227.5 95.9l3.6 -8.1M233.7 95.5l-3.6 -6.8M244.3 93.5l3.7 -7.5M254.5 95.7l3 -6.8M266.4 96.2l4.1 -7.7M275.2 97.1l3.6 -6.3M282.8 95.9l-3.7 -5.5M-1.8 100.9l3.1 -6.4M6.8 104.8l-3.3 -6.3M14 104.7l4.3 -5.5M26.3 105.6l-4.4 -6.6M34.4 101.4l-3.9 -7.4M44.8 101.4l-3.5 -6.6M50.8 101.7l2.7 -6M60.4 102.2l-4 -5.9M70.5 104.7l2.8 -6.3M81.9 101.3l-3.1 -5.8M89.1 103.8l-4.8 -7.1M98.4 100.8l3.9 -6.8M106.8 101l-3.6 -6.7M116.5 104.9l3.1 -6.9M130.5 102.9l3.6 -7.4M135.7 105.8l3.6 -6.7M146.7 106l-4.9 -7.2M153.5 102.5l2.7 -6M163.8 103l3.4 -6.5M174.5 102.8l3.8 -6.1M181.9 100.6l3.9 -7.4M190.4 102.6l4.2 -5.4M205.7 103.1l-2.5 -6.1M214 103l2.9 -6M222.3 105.6l4.4 -5.6M233.6 105.8l4.5 -7.8M240.8 106.2l3.5 -5.6M252.5 103.8l-3.8 -7.2M258.4 105.1l3.2 -6.5M268.4 105.9l-2.5 -6.2M275.1 103.8l4.3 -7.4M0.1 114.2l4 -7.6M12.7 112.3l-4.8 -7.1M18 114.9l2.7 -6M27.3 111.7l-3.5 -6.6M40.2 111.6l-3 -7.5M46.6 109.8l3.8 -7.2M55.7 110.7l3.7 -5.9M68 112.7l3.3 -7.5M75 110.3l3 -6.8M84.9 109.5l-4.3 -6.4M92.3 115.1l5.3 -6.8M101.2 110.4l3.1 -5.9M114 111.3l4.7 -6.1M122.9 114.1l-4.1 -7.7M129.7 111.7l3.6 -8M143.4 112.6l-3.6 -5.4M153.6 109.7l-3 -7.5M162.8 114.5l3.5 -7.3M172.7 114.9l3.4 -5.9M178.9 112.2l3.8 -7.7M187.1 113l3.5 -7.1M200.6 112.6l-3.6 -6.7M208.1 113l3.6 -8.1M217.1 111.4l-2.7 -6.6M224.4 112.2l4.2 -6.7M237.9 110.2l4.5 -7.8M242.8 110.5l3.6 -8M256.5 114.2l-3.7 -6.9M261.3 114.6l-3.9 -7.3M273.4 111.5l3.7 -6M284.9 110.6l4.4 -5.7M-6.6 121.5l4.2 -7.3M7.7 118.6l4.1 -6.6M16.4 121.5l3.6 -8M26.1 119.3l-2.7 -6.8M36.3 119.5l-4 -6M41.1 120.5l4.3 -7.5M54.8 118.6l5.5 -7.1M62 120.1l5.5 -7M71.6 124.2l-2.8 -6.9M81.8 123.3l5.5 -7M91.2 119.3l3.4 -5.9M96.6 119.9l-2.7 -6.6M109.5 120.3l3.3 -6.2M119.3 122.6l-3.5 -6.5M129.2 119.4l-3.1 -5.9M136.5 123.1l3.8 -6.5M144.2 118.9l3 -6.1M157 119.6l-3.7 -7M162.9 123.5l4.2 -7.8M175.7 120.9l-4.9 -7.3M182.2 120.7l3.3 -6.2M192.6 120.2l-3.7 -7M201.6 122.4l5 -6.4M209.3 120.4l-3.7 -7M220.9 119.9l3.2 -6M231.3 118.8l4.1 -7.7M242.1 118.3l-2.5 -6.1M252.7 123.1l3.5 -7.9M259 120.4l-2.9 -7.1M268.5 122.1l4.1 -5.2M280.9 124.2l4.6 -5.9M1.6 131.2l4.2 -7.9M13.1 130.9l5.2 -6.7M19.6 130.5l3.1 -7.1M29 127.6l4.5 -7.2M36.3 130.9l-3.8 -7.1M48.7 132.8l3.6 -6.8M56.7 127.9l-2.8 -6.9M69.2 132.4l-2.5 -6.1M75.4 130.4l4.2 -7.9M84.1 130l4.2 -5.4M92.5 127.5l-3.7 -6.9M103.2 128.5l4 -6.9M110.8 128.3l3.3 -6.9M120.5 127.8l3.8 -7.9M130.2 132.8l-4.4 -6.5M142.4 132.8l3.9 -7.3M150.6 127.1l3.2 -6.1M161.9 131.3l3 -6.2M170.6 129.4l3.4 -7M180.2 132.1l-3.7 -5.5M187.5 128.3l-4.4 -6.5M197.1 129.9l3.6 -7.3M210.2 130.4l3.6 -6.8M216.3 128.8l-3.9 -7.4M224.6 127.5l-4.7 -7M234.9 129.6l4 -6.5M244 130.2l-3.9 -5.7M254.8 129.4l3.3 -6.2M265.2 127.2l4.6 -5.8M273.4 130.2l-3.1 -7.7M282.1 132.8l-2.4 -6M-1.2 138l-3 -7.4M7.4 137.1l4.5 -7.1M13.7 138.8l-2.9 -7.2M21.5 136.4l-3.3 -6.3M35.4 141.5l-3 -7.5M42.4 137.5l3.8 -7.2M51.8 137.2l3.8 -6M60.7 140.7l-4 -7.5M68.5 140.4l3.1 -5.8M80.9 141.4l4.3 -6.9M90.7 139.9l3.1 -6.3M96.4 140.2l3.5 -6.7M106.8 136.3l3.3 -7.5M117.5 138.5l3.6 -6.7M127.3 141.2l3.9 -7.3M139.7 137.9l4 -7.6M147.6 138.2l3.6 -7.4M153.5 141l-2.5 -6.3M165.4 140.8l-3.2 -6M174.4 136l-4.2 -6.3M182.2 140l-4.3 -6.4M194.5 138.1l4 -7.5M203.1 140.9l-3.2 -7.8M210.4 137.9l-2.6 -6.4M220.9 140.6l4.1 -7.1M231.4 140.9l3 -6.8M240.3 141.7l3.7 -6.3M248.2 137.4l4.4 -7.1M257.7 136.2l-4.8 -7.1M267.1 137.1l4.1 -7.7M278.4 141.7l4.4 -7.6M0 145.3l3.3 -6.2M11.2 147.6l-2.6 -6.4M19.9 147.9l3 -6.7M28.6 150.4l-3.5 -6.5M35.9 149.3l4.3 -5.6M49.9 149l3 -6.7M58.7 148.1l-3.3 -8.1M67.6 146.8l-4.2 -7.8M76.5 149.6l4.2 -7.9M83.8 144.7l-3.7 -6.9M95.7 146.3l-3.7 -7M104 146.2l-3.4 -6.4M116.2 145.5l3.3 -6.7M125 148.3l3.2 -7.2M132.5 148.6l-4.1 -7.8M140.5 147.2l3.7 -7.6M149.5 147.3l4.6 -5.9M163.2 147.6l-3 -7.3M172.2 145.1l3.7 -7M178.1 144.6l4.1 -7.8M186.9 146.8l3 -6.7M195.5 148.6l3.5 -5.7M207 145.5l3.8 -7.9M217.2 147.2l3.8 -7.2M226.5 146.7l4.8 -6.1M238 145.2l4.2 -5.4M242.6 147.5l3.5 -7.1M252 150l4.4 -5.6M265.1 150.2l3.6 -8.2M275.5 150.2l3.3 -5.7M284.5 150.6l-3 -7.4M-1.4 153.9l4.1 -6.6M3.1 155.2l3.8 -6.2M14.3 154.3l3.1 -6.3M26.3 158l3.8 -7.2M30.6 153.8l-4.7 -7M45 155.8l-2.7 -6.8M51.8 158.8l3.8 -6M62.3 156.6l-2.7 -6.8M70.9 154.8l3.5 -8M78.8 154.7l4.7 -6M91.7 155.4l-3.3 -6.3M100 156.8l4.2 -6.7M106.9 154.8l-2.7 -6.7M119.6 154.6l4.1 -5.2M127.8 153.9l5.2 -6.6M136.6 153.7l3.2 -7.2M145.6 155.5l-4.9 -7.3M158.8 155.9l5 -6.4M164.2 158.1l-3.5 -6.6M175 159.1l3.5 -5.7M181.3 153.6l-5 -7.4M195.9 154.3l3.5 -6.1M205.6 159l3 -6.7M210.1 157.7l5.5 -7M220 157.6l3.5 -6.1M230.2 157.8l3.6 -8M243 153.8l-2.6 -6.5M250.9 154.1l3.4 -6.4M257.8 156.5l4.3 -7.4M270.2 156.6l4.2 -7.8M278.9 153.5l3.9 -7.9M-1.2 168l3.8 -7.1M8.9 167l4.5 -7.7M18.6 168.2l4.1 -6.5M27 167.9l4.7 -7.6M37.9 165.7l-3.7 -6.9M45.7 163.2l5.1 -6.6M59.9 162.3l3.8 -6.5M67.2 162.6l-2.5 -6.1M73 164l-3.1 -5.8M87.4 165.6l-3.9 -7.3M95.4 164.1l-4.1 -6.1M103.7 165.7l3.6 -6.2M111.9 167.8l3.5 -7.9M122.7 165.6l3.6 -8M134.9 164.1l-4.4 -6.5M139.6 167.9l3.4 -6.4M151.9 162.2l3.6 -6.8M160.5 167.7l-4.4 -6.5M171 166.2l3.8 -6.5M179.7 166l3.6 -6.8M187.6 166l2.7 -6.1M200.9 163.9l3.6 -6.7M206.2 162.5l-4.5 -6.6M218.7 163.7l3.8 -7.9M223.9 164.3l3.1 -5.9M235.6 165.1l3.2 -6.5M245.1 167.8l4.1 -7M256.3 168.1l5.4 -6.9M265.7 166.5l3.5 -7.8M271 165.1l4.4 -7M285.2 162.3l-2.9 -7.2M-4.2 174.9l-4.6 -6.8M8 174.9l2.7 -6.1M12.5 176.9l-4.1 -7.7M22.7 174.7l-4 -7.4M36.5 174.7l3.6 -5.8M42.6 173.4l4 -6.3M52.8 176.7l4 -7M60.1 175.3l2.7 -6M71.2 176.9l3.3 -6.2M81.8 174.1l-3.4 -6.4M91.1 171.2l3.4 -6.3M98.4 176.6l-4.1 -7.8M109 174.5l3.6 -6.3M119.8 173l3.2 -6.5M130.6 171.4l3 -6.1M134.3 175.5l-3.7 -6.9M144.6 174.5l-2.7 -6.6M155.2 173l-4.2 -7.9M165.4 176.7l-4.5 -6.7M172.9 176.5l4 -7.5M181.7 173.6l3.6 -7.4M195.3 176.5l-3.6 -6.8M203.3 173.5l3.1 -5.8M210.3 175.6l2.7 -6.1M219.7 176.8l-3.2 -7.9M229.6 175.8l3.5 -5.6M240.1 173.6l3.4 -5.9M248 172.5l3.8 -7.9M256.6 172.6l4.1 -7.1M270.8 177l4.8 -6.1M277.4 174.9l-4.6 -6.8M-2 184.1l3.6 -5.8M10.5 182.2l-4.2 -6.2M20.9 183.5l4.3 -5.5M31 182.7l-3 -7.4M40.9 183.6l3.9 -6.2M46 185l-4.3 -6.4M58.5 185l3.7 -5.9M68.2 184l-2.9 -7.1M76.9 181l4.7 -6M86 182.3l3.4 -6.4M94.4 182.6l4.3 -7.5M105.1 183.9l-4.3 -6.4M115.8 180.2l4.4 -5.6M124.2 185.5l4.1 -7M131.9 183.7l3.3 -6.2M141.9 185.7l-4.1 -6.1M148.2 182.3l-4 -7.4M158 182.1l-4.1 -7.6M172.9 181l4.7 -7.4M179.3 180.1l-3.9 -5.8M186.1 185.7l-3.1 -7.7M199.6 183.3l3.1 -6.4M206.9 180.7l-2.5 -6.1M218.8 182.9l-2.5 -6.1M226.5 182.8l3.5 -6M236.7 181.5l-4.8 -7.1M246.2 180.4l3.3 -5.7M254.7 185.7l-3.7 -7M263 184.4l-3.1 -5.9M273.6 180.8l4.6 -5.8M282 181.4l3.2 -6.6M-3.9 191.8l-4.2 -6.2M3.3 190.5l5.3 -6.8M13 188.8l4.7 -7.4M25.6 190.2l4.1 -6.5M34.6 190.3l-2.7 -6.8M44.2 190.6l5.4 -6.9M54.5 192.8l-3.1 -5.8M62.5 194.5l4.3 -5.6M71.8 190.5l-3 -7.5M82.3 193.9l2.8 -6.3M92.5 192.7l-2.6 -6.4M100 190.7l-3.2 -7.8M111 190l4.6 -5.8M118.2 192.6l4 -7.6M129.2 192.7l4.7 -7.5M134.6 188.9l3.7 -6.4M147 193.8l3.1 -5.9M155.3 194.1l3.5 -7.2M163.8 192.6l-3.1 -7.6M171.9 193.3l3.7 -6M183.1 190.8l-3.3 -6.3M192.2 188.7l-4.1 -6.1M203.4 190.2l3.2 -6M212 191.7l3.6 -6.3M222.8 191.6l-4.2 -6.2M230.2 190.2l3.3 -6.8M243.4 193.4l-4 -7.6M246.9 190.4l3.5 -5.6M259.9 190.3l3.1 -6.3M269.7 192.8l4.2 -7.2M275.5 191.6l4.4 -5.6M-1.9 198.9l3.9 -8M9.7 200.7l-3.1 -5.8M19.6 203.3l3.1 -5.9M26 198.3l3.5 -6.6M38 203.3l3.8 -7.9M48.3 200.9l3.5 -6M58.6 198.9l3.9 -6.7M67.4 202.3l4.8 -7.6M73 201.7l4.1 -7.8M83.8 199.3l3 -6.2M94.8 203.3l4.3 -5.5M106 201.7l4.4 -7.1M112.6 201.8l5.1 -6.5M123.7 201.8l-3.3 -8.1M134.1 202.8l-3.1 -7.7M142.5 201.1l4.7 -7.5M153.3 199.2l-4.1 -7.7M159.8 201.3l4 -6.4M168.3 199.1l4.1 -7.8M176.7 198.5l-3.3 -6.3M191.3 201.4l-3.8 -5.6M200.7 199.3l-3.6 -5.4M207.5 199.7l4.1 -6.6M214.6 199.6l3.5 -7.2M225.3 198.3l3.2 -7.3M233.9 197.5l5 -6.4M244.8 200.3l2.9 -5.9M256.7 197.6l3.5 -6M262.3 200l3 -6.8M274.9 201.7l3.1 -5.9M280.6 198.4l3.5 -5.6M-5.6 210.1l3.6 -5.8M3.2 208.3l4.8 -7.6M15.4 207.6l3.5 -6M21.9 207.4l3.3 -7.4M31 211.2l-4.7 -7M40.9 209.6l-4.3 -6.4M49.4 208l4.8 -7.6M60 208.2l-3.6 -5.4M69.9 207.9l3.3 -7.5M79.9 210.4l3.5 -6.6M92.4 206.4l-3.4 -6.4M97.9 212.2l2.7 -6.2M109.6 211.4l-3.5 -6.5M115.9 212.1l-3.1 -7.7M128.1 210.3l-3.7 -7M140 211.2l3.3 -7.4M145 209.2l3.6 -5.7M155.4 209.7l-3.9 -5.8M163.3 208.9l4.6 -7.3M173.2 208.4l5.1 -6.5M184.3 207.8l-2.8 -6.9M194.8 206.9l-3.1 -7.6M203.6 209l4.1 -6.6M209.6 210.5l3.5 -6.1M219.7 209l-4.3 -6.4M229.6 209.6l3.6 -6.2M240.6 209.9l5.4 -6.9M247.6 209.8l-4.6 -6.8M258.7 207.3l-3.1 -7.7M271.4 206.5l3.6 -5.7M275.8 210.3l-3.4 -6.3M1 220.1l3.5 -6.6M7.4 218.9l3.6 -6.8M16.7 216l2.9 -6M28 215.6l-3.1 -7.7M40.8 217.2l-3 -7.5M50 218.3l4.2 -6.7M58.2 220.8l-3.4 -6.4M67.3 217.8l3.3 -5.7M78 217.9l3.6 -8M85.4 215.4l-2.6 -6.3M95.8 220.9l-4 -7.5M101.5 218.7l-3.5 -6.7M112.9 220.5l-4.3 -6.4M124 220.1l3.1 -5.9M129.6 217.4l2.7 -6.1M141.4 218.4l4.2 -5.3M152.7 217.7l-2.7 -6.7M159.8 220.5l4.4 -7.1M172.2 217.9l2.8 -6.2M177 220.3l3.4 -7.6M187 217.7l4.2 -6.8M196.8 215.3l-4.6 -6.9M209.2 215.7l-2.5 -6.1M216.7 220.4l5.2 -6.7M228.3 220.5l3.5 -6M234.5 220.5l3.3 -6.2M244.6 215.9l3.1 -7M253.4 219.3l4.6 -7.4M265.8 216.4l3.8 -7.7M276 220.2l3.1 -6.4M282.8 220.2l-3.7 -7.1M-2.4 225.8l4.6 -5.9M5.2 224.5l2.7 -6.2M13.3 226.3l4.3 -7.5M23.4 226l4.3 -5.5M31.4 228l-4.5 -6.6M42.4 227.7l-4.2 -6.2M54.1 224.5l3.6 -6.2M60.9 228.9l3.5 -7.8M73.3 226.1l-3.8 -7.2M79.9 227.2l3.6 -8.2M92.5 225.6l3.5 -6.6M100.6 229.7l3.7 -6.9M109 228.5l3.6 -6.8M120.5 225.9l4.7 -6.1M129.4 229.4l-4 -7.5M138.4 224l-3 -7.5M146.4 223.9l3.5 -6.7M157.6 227.4l3.3 -5.7M165 226.7l3.2 -6.6M174.1 225.9l-3.3 -8.3M184.7 228.3l3.9 -7.2M191.2 228.6l2.9 -6M203.7 226.8l2.8 -6.3M211 225.7l-3.4 -6.4M224.3 228.3l4.1 -7M228.8 225.7l3 -6.1M240.6 226.3l3.9 -6.7M247.4 224.7l2.7 -6M262 228.5l2.8 -6.2M268.4 227.2l-2.7 -6.7M275.6 225.8l3.8 -6.5M1 233.2l4.1 -7.7M9.2 236.5l3.3 -7.5M19 235.7l3.5 -6.1M26.1 233l3.4 -6.9M36.1 233.8l3.9 -6.8M44.7 238.5l-4.8 -7.1M57.9 235.5l4.1 -7.1M64.6 237.1l5.3 -6.7M76.8 234.8l3.6 -6.7M87.8 235.4l-2.6 -6.3M92.2 234.3l3.8 -7.7M105.8 235.2l3.8 -6.6M115.2 237.4l-2.9 -7.2M125.7 236.8l3 -6.2M131.6 234.8l3.1 -5.8M144.1 236.6l-2.6 -6.5M148.3 234.5l-3.5 -6.6M162.2 233l-4.6 -6.8M168.9 233.7l3.7 -6.4M180.9 234l3.9 -7.3M186.9 234.9l3.6 -6.8M199.5 234.4l-2.9 -7.1M205 233.2l4.2 -7.9M219.4 236.2l4.2 -7.9M224.3 238.5l4.3 -5.5M233.4 234.4l-2.8 -7.1M243.3 238l3.8 -7.8M251.7 234.4l-4.9 -7.3M263.3 233.1l-4.8 -7.2M270.7 234.1l-3.1 -7.7M282.3 235.6l-4 -7.4M-4.5 244.7l3.3 -6.7M4.1 241.5l-3.1 -7.6M15.3 246.2l3.6 -5.7M21.2 245.9l4.2 -5.4M30.8 244.3l3.5 -5.6M42.2 244.1l4.1 -6.6M51.9 243.8l4.3 -7.4M59.4 243.7l-4 -5.9M73 246.4l3.6 -8M81.6 244.2l3.4 -7M90.1 247.3l3.9 -7.9M100 246.8l3.3 -5.7M106.6 241.4l-3.7 -7M116.1 245.9l-3.6 -6.8M129.5 244l-4.1 -6.1M139.3 246.1l3.4 -6.3M145.9 244.2l3.9 -7.9M153.3 244.1l2.9 -6.5M162.8 246.7l4.1 -7.8M176.4 242.2l3.5 -7.1M181.7 243.4l3.8 -6.5M193.5 242.2l3.9 -6.2M205.4 246.8l5.3 -6.8M213.4 242.6l4.4 -7.6M222.2 243.5l-4.2 -7.9M231.9 242.2l4.7 -7.5M241.4 242l3.2 -6M252.2 243l-3.2 -6M262 245.7l-2.9 -7.1M270.2 244.5l3.1 -6.5M278.6 245.6l3.4 -7.6M-1.4 256l4.3 -5.5M11.6 250.9l-3.7 -5.5M21.6 255.1l3.7 -7M31.2 255.8l4.4 -7.1M35.6 250.6l4.2 -7.2M45 253.7l5.1 -6.5M58.1 254.4l3.5 -6.6M68.1 252.5l-4.6 -6.9M75.7 251.4l3.3 -6.9M86.6 251.1l5.5 -7.1M96.7 251l3.6 -8.1M105.2 250.3l3.5 -7.9M114.9 253.9l-2.8 -6.8M123.7 252.3l3.9 -8.1M134.8 254.2l3.8 -7.1M144.5 255.1l4.5 -7.8M152.8 253.8l3.3 -7.3M162.7 253.9l3.9 -6.3M170.8 252.1l3.9 -6.7M179.9 255.3l5.2 -6.6M188.5 255.6l4 -6.4M198.4 255.7l-3.7 -5.5M206.4 250.6l-4.1 -7.7M218.4 254.7l2.9 -6M225.8 255l4.5 -5.8M236.2 252l3.2 -6.6M243.9 255.6l3.6 -6.3M256.6 253.9l-3.1 -7.6M261.3 252.3l2.9 -6.6M275.5 254.6l2.7 -6.1M281.2 250.8l3.8 -7.7M-2.3 259.9l4 -6.9M6 259.8l3.9 -8M17.6 259.4l3.6 -6.7M25.6 259.1l2.7 -6.2M32.4 262.6l3.2 -6.6M45.9 264.3l-4.1 -7.8M54.8 261.1l3.8 -7.1M61.7 262.1l5.1 -6.5M72.5 262.2l2.6 -5.9M78 264.3l4.3 -7.4M92.1 262l-3.6 -6.7M96.6 262.2l4.1 -7.8M107.8 260.1l3.1 -6.9M117.7 262.2l-3.4 -6.3M128.7 260.8l-3.8 -5.6M136.2 260.1l3.1 -5.7M147.9 264.9l4.2 -6.8M155.6 264.4l-3.1 -7.7M165.9 264.7l4.5 -5.7M172.1 259.1l3.5 -7.9M184 261.5l-2.8 -6.9M192.2 260.1l3.8 -6.6M200 262.7l4.6 -7.4M210.7 259.8l4.5 -5.8M220.1 259.9l4.2 -7.9M233.5 262.2l-2.5 -6.1M242.5 260.3l3.7 -5.9M246.8 264.5l-3.2 -8M256.5 264.7l4.4 -5.6M266.2 262.2l3.3 -5.8M275.6 263.4l3.6 -6.7" stroke="#fff" stroke-width="1.1" fill="none" opacity=".95"/><path d="M158 -2C156 -0.3 150.3 3.3 146 8C141.7 12.7 134.7 20.2 132 26C129.3 31.8 129.3 37.7 130 43C130.7 48.3 133 53.7 136 58C139 62.3 142.8 65.5 148 69C153.2 72.5 162.3 75 167 79C171.7 83 175.2 87.5 176 93C176.8 98.5 171.5 107.2 172 112C172.5 116.8 174 118.8 179 122C184 125.2 195.2 130.5 202 131C208.8 131.5 213.7 127.8 220 125C226.3 122.2 233.3 115.7 240 114C246.7 112.3 253.8 113.7 260 115C266.2 116.3 273.3 118.2 277 122C280.7 125.8 281.8 132.3 282 138C282.2 143.7 280 151 278 156C276 161 272 163.3 270 168C268 172.7 265.3 179 266 184C266.7 189 272.7 195.7 274 198" fill="none" stroke="#3f74b0" stroke-width="2.2"/><path d="M0 246C1 246.7 4.5 247.3 6 250C7.5 252.7 8.5 260 9 262" fill="none" stroke="#3f74b0" stroke-width="2.2"/><path d="M282 228C281 230 276.8 234.3 276 240C275.2 245.7 276.8 258.3 277 262" fill="none" stroke="#3f74b0" stroke-width="2.2"/><path d="M0 44L36 38L102 38L130 12L136 1" fill="none" stroke="#878785" stroke-width="3.2" stroke-linejoin="round"/><path d="M36 38L57 0" fill="none" stroke="#878785" stroke-width="3.2" stroke-linejoin="round"/><path d="M102 38L120 68L136 95" fill="none" stroke="#878785" stroke-width="3.2" stroke-linejoin="round"/><path d="M136 95L106 100L79 108L61 129L56 139" fill="none" stroke="#878785" stroke-width="3.2" stroke-linejoin="round"/><path d="M136 95L130 121L124 133L119 151L119 261" fill="none" stroke="#878785" stroke-width="3.2" stroke-linejoin="round"/><path d="M136 95L144 131L150 143" fill="none" stroke="#878785" stroke-width="3.2" stroke-linejoin="round"/><path d="M136 95L156 66L171 39L193 0" fill="none" stroke="#878785" stroke-width="3.2" stroke-linejoin="round"/><path d="M171 39L193 76L213 115L219 133" fill="none" stroke="#878785" stroke-width="3.2" stroke-linejoin="round"/><path d="M171 39L203 32L229 24L252 3" fill="none" stroke="#878785" stroke-width="3.2" stroke-linejoin="round"/><path d="M2 144L56 139L68 145L119 151L150 161" fill="none" stroke="#878785" stroke-width="3.2" stroke-linejoin="round"/><path d="M173 173L177 178L195 199L202 214" fill="none" stroke="#878785" stroke-width="3.2" stroke-linejoin="round"/><path d="M217 173L215 178L208 199L202 215L196.6 229L191 253L189 262" fill="none" stroke="#878785" stroke-width="3.2" stroke-linejoin="round"/><path d="M280 109L260 119L249 133" fill="none" stroke="#878785" stroke-width="3.2" stroke-linejoin="round"/><path d="M246 174L262 183L281 193" fill="none" stroke="#878785" stroke-width="3.2" stroke-linejoin="round"/><path d="M0 44L36 38L102 38L130 12L136 1" fill="none" stroke="#f4edb6" stroke-width="1.8" stroke-dasharray="2.2 2" stroke-linejoin="round"/><path d="M36 38L57 0" fill="none" stroke="#f4edb6" stroke-width="1.8" stroke-dasharray="2.2 2" stroke-linejoin="round"/><path d="M102 38L120 68L136 95" fill="none" stroke="#f4edb6" stroke-width="1.8" stroke-dasharray="2.2 2" stroke-linejoin="round"/><path d="M136 95L106 100L79 108L61 129L56 139" fill="none" stroke="#f4edb6" stroke-width="1.8" stroke-dasharray="2.2 2" stroke-linejoin="round"/><path d="M136 95L130 121L124 133L119 151L119 261" fill="none" stroke="#f4edb6" stroke-width="1.8" stroke-dasharray="2.2 2" stroke-linejoin="round"/><path d="M136 95L144 131L150 143" fill="none" stroke="#f4edb6" stroke-width="1.8" stroke-dasharray="2.2 2" stroke-linejoin="round"/><path d="M136 95L156 66L171 39L193 0" fill="none" stroke="#f4edb6" stroke-width="1.8" stroke-dasharray="2.2 2" stroke-linejoin="round"/><path d="M171 39L193 76L213 115L219 133" fill="none" stroke="#f4edb6" stroke-width="1.8" stroke-dasharray="2.2 2" stroke-linejoin="round"/><path d="M171 39L203 32L229 24L252 3" fill="none" stroke="#f4edb6" stroke-width="1.8" stroke-dasharray="2.2 2" stroke-linejoin="round"/><path d="M2 144L56 139L68 145L119 151L150 161" fill="none" stroke="#f4edb6" stroke-width="1.8" stroke-dasharray="2.2 2" stroke-linejoin="round"/><path d="M173 173L177 178L195 199L202 214" fill="none" stroke="#f4edb6" stroke-width="1.8" stroke-dasharray="2.2 2" stroke-linejoin="round"/><path d="M217 173L215 178L208 199L202 215L196.6 229L191 253L189 262" fill="none" stroke="#f4edb6" stroke-width="1.8" stroke-dasharray="2.2 2" stroke-linejoin="round"/><path d="M280 109L260 119L249 133" fill="none" stroke="#f4edb6" stroke-width="1.8" stroke-dasharray="2.2 2" stroke-linejoin="round"/><path d="M246 174L262 183L281 193" fill="none" stroke="#f4edb6" stroke-width="1.8" stroke-dasharray="2.2 2" stroke-linejoin="round"/><path d="M-170 -39.1L-170 -0.5M-170 -39.1L-136 -57.7M-170 -39.1L-204 -57.7M-102 -39.1L-102 -0.5M-102 -39.1L-68 -57.7M-102 -39.1L-136 -57.7M-34 -39.1L-34 -0.5M-34 -39.1L0 -57.7M-34 -39.1L-68 -57.7M34 -39.1L34 -0.5M34 -39.1L68 -57.7M34 -39.1L0 -57.7M102 -39.1L102 -0.5M102 -39.1L136 -57.7M102 -39.1L68 -57.7M170 -39.1L170 -0.5M170 -39.1L204 -57.7M170 -39.1L136 -57.7M238 -39.1L238 -0.5M238 -39.1L272 -57.7M238 -39.1L204 -57.7M306 -39.1L306 -0.5M306 -39.1L340 -57.7M306 -39.1L272 -57.7M374 -39.1L374 -0.5M374 -39.1L408 -57.7M374 -39.1L340 -57.7M-136 18.1L-136 56.7M-136 18.1L-102 -0.5M-136 18.1L-170 -0.5M-68 18.1L-68 56.7M-68 18.1L-34 -0.5M-68 18.1L-102 -0.5M0 18.1L0 56.7M0 18.1L34 -0.5M0 18.1L-34 -0.5M68 18.1L68 56.7M68 18.1L102 -0.5M68 18.1L34 -0.5M136 18.1L136 56.7M136 18.1L170 -0.5M136 18.1L102 -0.5M204 18.1L204 56.7M204 18.1L238 -0.5M204 18.1L170 -0.5M272 18.1L272 56.7M272 18.1L306 -0.5M272 18.1L238 -0.5M340 18.1L340 56.7M340 18.1L374 -0.5M340 18.1L306 -0.5M408 18.1L408 56.7M408 18.1L442 -0.5M408 18.1L374 -0.5M-170 75.3L-170 113.9M-170 75.3L-136 56.7M-170 75.3L-204 56.7M-102 75.3L-102 113.9M-102 75.3L-68 56.7M-102 75.3L-136 56.7M-34 75.3L-34 113.9M-34 75.3L0 56.7M-34 75.3L-68 56.7M34 75.3L34 113.9M34 75.3L68 56.7M34 75.3L0 56.7M102 75.3L102 113.9M102 75.3L136 56.7M102 75.3L68 56.7M170 75.3L170 113.9M170 75.3L204 56.7M170 75.3L136 56.7M238 75.3L238 113.9M238 75.3L272 56.7M238 75.3L204 56.7M306 75.3L306 113.9M306 75.3L340 56.7M306 75.3L272 56.7M374 75.3L374 113.9M374 75.3L408 56.7M374 75.3L340 56.7M-136 132.5L-136 171.1M-136 132.5L-102 113.9M-136 132.5L-170 113.9M-68 132.5L-68 171.1M-68 132.5L-34 113.9M-68 132.5L-102 113.9M0 132.5L0 171.1M0 132.5L34 113.9M0 132.5L-34 113.9M68 132.5L68 171.1M68 132.5L102 113.9M68 132.5L34 113.9M136 132.5L136 171.1M136 132.5L170 113.9M136 132.5L102 113.9M204 132.5L204 171.1M204 132.5L238 113.9M204 132.5L170 113.9M272 132.5L272 171.1M272 132.5L306 113.9M272 132.5L238 113.9M340 132.5L340 171.1M340 132.5L374 113.9M340 132.5L306 113.9M408 132.5L408 171.1M408 132.5L442 113.9M408 132.5L374 113.9M-170 189.7L-170 228.3M-170 189.7L-136 171.1M-170 189.7L-204 171.1M-102 189.7L-102 228.3M-102 189.7L-68 171.1M-102 189.7L-136 171.1M-34 189.7L-34 228.3M-34 189.7L0 171.1M-34 189.7L-68 171.1M34 189.7L34 228.3M34 189.7L68 171.1M34 189.7L0 171.1M102 189.7L102 228.3M102 189.7L136 171.1M102 189.7L68 171.1M170 189.7L170 228.3M170 189.7L204 171.1M170 189.7L136 171.1M238 189.7L238 228.3M238 189.7L272 171.1M238 189.7L204 171.1M306 189.7L306 228.3M306 189.7L340 171.1M306 189.7L272 171.1M374 189.7L374 228.3M374 189.7L408 171.1M374 189.7L340 171.1M-136 246.9L-136 285.5M-136 246.9L-102 228.3M-136 246.9L-170 228.3M-68 246.9L-68 285.5M-68 246.9L-34 228.3M-68 246.9L-102 228.3M0 246.9L0 285.5M0 246.9L34 228.3M0 246.9L-34 228.3M68 246.9L68 285.5M68 246.9L102 228.3M68 246.9L34 228.3M136 246.9L136 285.5M136 246.9L170 228.3M136 246.9L102 228.3M204 246.9L204 285.5M204 246.9L238 228.3M204 246.9L170 228.3M272 246.9L272 285.5M272 246.9L306 228.3M272 246.9L238 228.3M340 246.9L340 285.5M340 246.9L374 228.3M340 246.9L306 228.3M408 246.9L408 285.5M408 246.9L442 228.3M408 246.9L374 228.3M-170 304.1L-170 342.7M-170 304.1L-136 285.5M-170 304.1L-204 285.5M-102 304.1L-102 342.7M-102 304.1L-68 285.5M-102 304.1L-136 285.5M-34 304.1L-34 342.7M-34 304.1L0 285.5M-34 304.1L-68 285.5M34 304.1L34 342.7M34 304.1L68 285.5M34 304.1L0 285.5M102 304.1L102 342.7M102 304.1L136 285.5M102 304.1L68 285.5M170 304.1L170 342.7M170 304.1L204 285.5M170 304.1L136 285.5M238 304.1L238 342.7M238 304.1L272 285.5M238 304.1L204 285.5M306 304.1L306 342.7M306 304.1L340 285.5M306 304.1L272 285.5M374 304.1L374 342.7M374 304.1L408 285.5M374 304.1L340 285.5" fill="none" stroke="#1a2410" stroke-width="1" transform="translate(.5 0)"/><path d="M170 -0.5L204 18.1L238 -0.5" fill="none" stroke="#fff" stroke-width="2.2" stroke-linejoin="round"/><path d="M238 75.3L238 113.9L272 132.5L272 171.1L238 189.7L238 228.3L272 246.9L272 268" fill="none" stroke="#fff" stroke-width="2.2" stroke-linejoin="round"/><path d="M24 -6L68 18.1L68 56.7L34 75.3L34 113.9L0 132.5L0 171.1L34 189.7L34 228.3L68 246.9L68 268" fill="none" stroke="#8c0b0b" stroke-width="4.4" stroke-linejoin="miter"/><path d="M68 18.1L102 -0.5L136 18.1L136 56.7L170 75.3L204 56.7L238 75.3L272 56.7L272 18.1L284 11.5" fill="none" stroke="#8c0b0b" stroke-width="4.4" stroke-linejoin="miter"/><path d="M136 18.1L170 -0.5" fill="none" stroke="#8c0b0b" stroke-width="4.4" stroke-linejoin="miter"/><path d="M102 -0.5L102 -12" fill="none" stroke="#8c0b0b" stroke-width="4.4" stroke-linejoin="miter"/><path d="M136 28L136 50" fill="none" stroke="#fff" stroke-width="1.8"/><path d="M142 61.5L158 70" fill="none" stroke="#fff" stroke-width="1.8"/><path d="M146 12.5L164 2.5" fill="none" stroke="#fff" stroke-width="1.8"/><path d="M181 69.5L196 61.5" fill="none" stroke="#fff" stroke-width="1.8"/><path d="M212 61L228 70" fill="none" stroke="#fff" stroke-width="1.8"/><circle cx="136" cy="1" r="4.3" fill="#fff020" stroke="#000" stroke-width="1.2"/><circle cx="56" cy="139" r="4.3" fill="#fff020" stroke="#000" stroke-width="1.2"/><text x="74" y="8" font-family="DejaVu Sans,sans-serif" font-weight="bold" font-size="13.5" fill="#000" textLength="50.5">Danzig</text><text x="8.5" y="158.5" font-family="DejaVu Sans,sans-serif" font-weight="bold" font-size="14" fill="#101010" textLength="58">Poznan</text><text x="126" y="180" font-family="DejaVu Sans,sans-serif" font-weight="bold" font-size="14" fill="#101010">Łodz</text><text x="220.29999999999995" y="105.19999999999999" font-family="Liberation Sans,sans-serif" font-weight="bold" font-size="13.8" fill="#1212c4" font-style="italic" textLength="46.5">Vistula</text><text x="174.79999999999995" y="219.60000000000002" font-family="Liberation Sans,sans-serif" font-weight="bold" font-size="27.5" fill="#8b0a10" textLength="103">POLAN</text><text x="282" y="219.39999999999998" font-family="Liberation Sans,sans-serif" font-weight="bold" font-size="27.5" fill="#8b0a10" >D</text><text x="0.2999999999999545" y="178.5" font-family="DejaVu Sans,sans-serif" font-weight="bold" font-size="14.5" fill="#8b0a10" textLength="27.8">SIA</text><text x="264.29999999999995" y="150" font-family="DejaVu Sans,sans-serif" font-weight="bold" font-size="12.5" fill="#e01010">rsaw</text><rect x="140" y="129" width="7" height="7" fill="#101010"/><circle cx="143.5" cy="132.5" r="2.8" fill="#d86c18"/><rect x="208" y="129" width="7" height="7" fill="#101010"/><circle cx="211.5" cy="132.5" r="2.8" fill="#d86c18"/><rect x="216" y="121" width="7" height="7" fill="#101010"/><circle cx="219.5" cy="124.5" r="2.8" fill="#10a078"/><g transform="translate(147.39999999999998 129.1) scale(0.7847)"><rect x="-0.6" y="-0.6" width="60.2" height="60.2" rx="5.5" fill="#0d88d2" stroke="#f4f8fc" stroke-width="2"/><g transform="translate(0 -1.2)"><text x="30.5" y="11.2" text-anchor="middle" font-family="Liberation Sans,sans-serif" font-size="9.5" font-weight="bold" fill="#0a1a30" textLength="16.5" lengthAdjust="spacingAndGlyphs">xxx</text><rect x="15.5" y="14.5" width="29" height="22" fill="#f6eef0" stroke="#e06868" stroke-width="1.2"/><path d="M16 15l11 10M44 15l-11 10M16 36l9-8M44 36l-9-8" stroke="#e06868" stroke-width="1.2"/><path d="M23 28.5c-3.5-5-.5-8.5 1-13.5 1.5 3 2.5 5 2.5 7.5 1-5 2.5-10 3.5-15.5 1 5.5 3.5 9 3.5 13 1-2.5 2-5 3-8 2.5 6 4.5 11.5 1.5 16.5z" fill="#ffe818" stroke="#e83010" stroke-width="1.4" stroke-linejoin="round"/><text x="0" y="0" transform="translate(53 32) rotate(-90)" font-family="Liberation Sans,sans-serif" font-size="8" font-weight="bold" fill="#0a1a30">POL</text><text x="30" y="54.2" text-anchor="middle" font-family="Liberation Sans,sans-serif" font-size="17" fill="#082850" textLength="25" lengthAdjust="spacingAndGlyphs">0-3</text></g></g><g transform="translate(215.60000000000002 129.1) scale(0.7847)"><rect x="-0.6" y="-0.6" width="60.2" height="60.2" rx="5.5" fill="#000" stroke="#f4f8fc" stroke-width="2"/><g transform="translate(0 -1.2)"><text x="30.5" y="11.8" text-anchor="middle" font-family="Liberation Sans,sans-serif" font-size="9.5" font-weight="bold" fill="#f0f4f8" textLength="17" lengthAdjust="spacingAndGlyphs">xxx</text><rect x="15.8" y="14.8" width="29" height="21.6" fill="#000" stroke="#fff" stroke-width="1.5"/><path d="M16.5 35.6L44 15.6" stroke="#fff" stroke-width="1.6"/><text x="0" y="0" transform="translate(11.5 39.5) rotate(-90)" font-family="Liberation Sans,sans-serif" font-size="8.5" font-weight="bold" fill="#e81818" textLength="32" lengthAdjust="spacingAndGlyphs">Maria T.</text><text x="30.5" y="55" text-anchor="middle" font-family="Liberation Sans,sans-serif" font-size="17.5" font-weight="bold" fill="#d81c1c" stroke="#fff" stroke-width="1.8" paint-order="stroke" textLength="25" lengthAdjust="spacingAndGlyphs">3-5</text></g></g><path d="M186 152L199.5 145.5L197 149.6L205 149.8L210.5 144.3L215 144.3L215 160L210.5 160L205 154.6L197 154.8L199.5 159Z" fill="url(#arr)" stroke="#201008" stroke-width="1"/></svg>
<div class="a" style="left:725px;top:69px;width:299px;height:281px;border-top:3px solid rgba(10,60,100,.35);border-left:1px solid #17485c;pointer-events:none"></div>
<div class="a" style="left:1006px;top:72px;width:18px;height:261px;background:linear-gradient(90deg,#000 0,#000 1px,#b4ac9c 1px,#c8c0b0 3px,#6c6252 3.5px,#5a5040 8px,#4a4234 11px,#3c3428 12px,#c4bcac 12px,#c4bcac 14px,#3a3226 14px,#2a241a 17px,#000 17px)"></div>
<div class="a" style="left:1006px;top:71px;width:18px;height:17px;background:linear-gradient(135deg,#9a9282 0,#7c7464 40%,#5a5244 100%);border:1px solid #000;box-shadow:inset 1px 1px 0 #b0a894"></div>
<div class="a" style="left:1006px;top:317px;width:18px;height:17px;background:linear-gradient(135deg,#9a9282 0,#7c7464 40%,#5a5244 100%);border:1px solid #000;box-shadow:inset 1px 1px 0 #b0a894"></div>
<div class="a" style="left:1008px;top:142px;width:13px;height:15px;background:linear-gradient(135deg,#f4f2ec,#d8d2c6 50%,#a8a090);border:1px solid #000;border-top-color:#fff;border-left-color:#fff"></div>
<div class="a" style="left:727px;top:333px;width:279px;height:17px;background:linear-gradient(#000 0,#000 1px,#c6beae 1px,#c6beae 4px,#2a2418 4px,#2a2418 5px,#5c5242 5px,#8c806a 8.5px,#463e30 12px,#000 12px,#000 13px,#cec6b6 13px,#cec6b6 16px,#000 16px)"></div>
<div class="a" style="left:726px;top:333px;width:17px;height:17px;background:linear-gradient(135deg,#9a9282 0,#7c7464 40%,#5a5244 100%);border:1px solid #000;box-shadow:inset 1px 1px 0 #b0a894"></div>
<div class="a" style="left:990px;top:333px;width:17px;height:17px;background:linear-gradient(135deg,#9a9282 0,#7c7464 40%,#5a5244 100%);border:1px solid #000;box-shadow:inset 1px 1px 0 #b0a894"></div>
<div class="a" style="left:858px;top:335px;width:15px;height:13px;background:linear-gradient(135deg,#f4f2ec,#d8d2c6 50%,#a8a090);border:1px solid #000;border-top-color:#fff;border-left-color:#fff"></div>
<div class="a" style="left:1007px;top:334px;width:17px;height:16px;background:linear-gradient(#c8c2b6,#a09888);border-right:1px solid #000;border-bottom:1px solid #000"></div>
<svg class="a" style="left:1006px;top:71px" width="18" height="263"><path d="M4.5 12.5l4.5-8 4.5 8z" fill="#d8d0c0"/><path d="M4.5 250.5l4.5 8 4.5-8z" fill="#d8d0c0"/></svg>
<svg class="a" style="left:726px;top:333px" width="281" height="17"><path d="M11.5 4.5l-8 4 8 4z" fill="#dcd4c0"/><path d="M269.5 4.5l8 4-8 4z" fill="#dcd4c0"/></svg>
<svg class="a" style="left:26px;top:425px" width="80" height="70"><rect x="2" y="6" width="7" height="7" fill="#101010"/><path d="M5.5 6.3l3.2 3.2-3.2 3.2-3.2-3.2z" fill="#d86c18"/><g transform="translate(9 5) scale(1)"><rect x="0" y="0" width="59" height="59" rx="4.5" fill="#0d88d2"/><g transform="translate(0 0)"><text x="30.5" y="11.2" text-anchor="middle" font-family="Liberation Sans,sans-serif" font-size="9.5" font-weight="bold" fill="#0a1a30" textLength="16.5" lengthAdjust="spacingAndGlyphs">xxx</text><rect x="15.5" y="14.5" width="29" height="22" fill="#f6eef0" stroke="#e06868" stroke-width="1.2"/><path d="M16 15l8 6.5M44 15l-8 6.5M16 36l8-6.5M44 36l-8-6.5" stroke="#e06868" stroke-width="1.1"/><text x="30" y="30" text-anchor="middle" font-family="Liberation Sans,sans-serif" font-size="12" fill="#e46a6a">P</text><text x="0" y="0" transform="translate(54 33.5) rotate(-90)" font-family="Liberation Sans,sans-serif" font-size="8" font-weight="bold" fill="#0a1a30" textLength="16" lengthAdjust="spacingAndGlyphs">POL</text><text x="30" y="54.2" text-anchor="middle" font-family="Liberation Sans,sans-serif" font-size="17" fill="#082850" textLength="25" lengthAdjust="spacingAndGlyphs">0-3</text></g></g></svg>
<div class="t ar k" style="left:36px;top:489.7px;font-size:12.5px;letter-spacing:.1px">No effect</div>
<svg class="a" style="left:26px;top:657px" width="80" height="72"><rect x="2" y="10" width="7" height="7" fill="#101010"/><path d="M5.5 10.3l3.2 3.2-3.2 3.2-3.2-3.2z" fill="#d86c18"/><rect x="10" y="2" width="7" height="7" fill="#101010"/><path d="M13.5 2.3l3.2 3.2-3.2 3.2-3.2-3.2z" fill="#10a078"/><g transform="translate(9 9) scale(1)"><rect x="0" y="0" width="59" height="59" rx="5" fill="#000"/><g transform="translate(0 0)"><text x="30.5" y="11.8" text-anchor="middle" font-family="Liberation Sans,sans-serif" font-size="9.5" font-weight="bold" fill="#f0f4f8" textLength="17" lengthAdjust="spacingAndGlyphs">xxx</text><rect x="15.8" y="14.8" width="29" height="21.6" fill="#000" stroke="#fff" stroke-width="1.5"/><path d="M16.5 35.6L44 15.6" stroke="#fff" stroke-width="1.6"/><text x="0" y="0" transform="translate(11.5 39.5) rotate(-90)" font-family="Liberation Sans,sans-serif" font-size="8.5" font-weight="bold" fill="#e81818" textLength="32" lengthAdjust="spacingAndGlyphs">Maria T.</text><text x="30.5" y="55" text-anchor="middle" font-family="Liberation Sans,sans-serif" font-size="17.5" font-weight="bold" fill="#d81c1c" stroke="#fff" stroke-width="1.8" paint-order="stroke" textLength="25" lengthAdjust="spacingAndGlyphs">3-5</text></g></g></svg>
<div class="t ar k" style="left:36px;top:725.7px;font-size:12.5px;letter-spacing:.1px">No effect</div>
</body></html>
